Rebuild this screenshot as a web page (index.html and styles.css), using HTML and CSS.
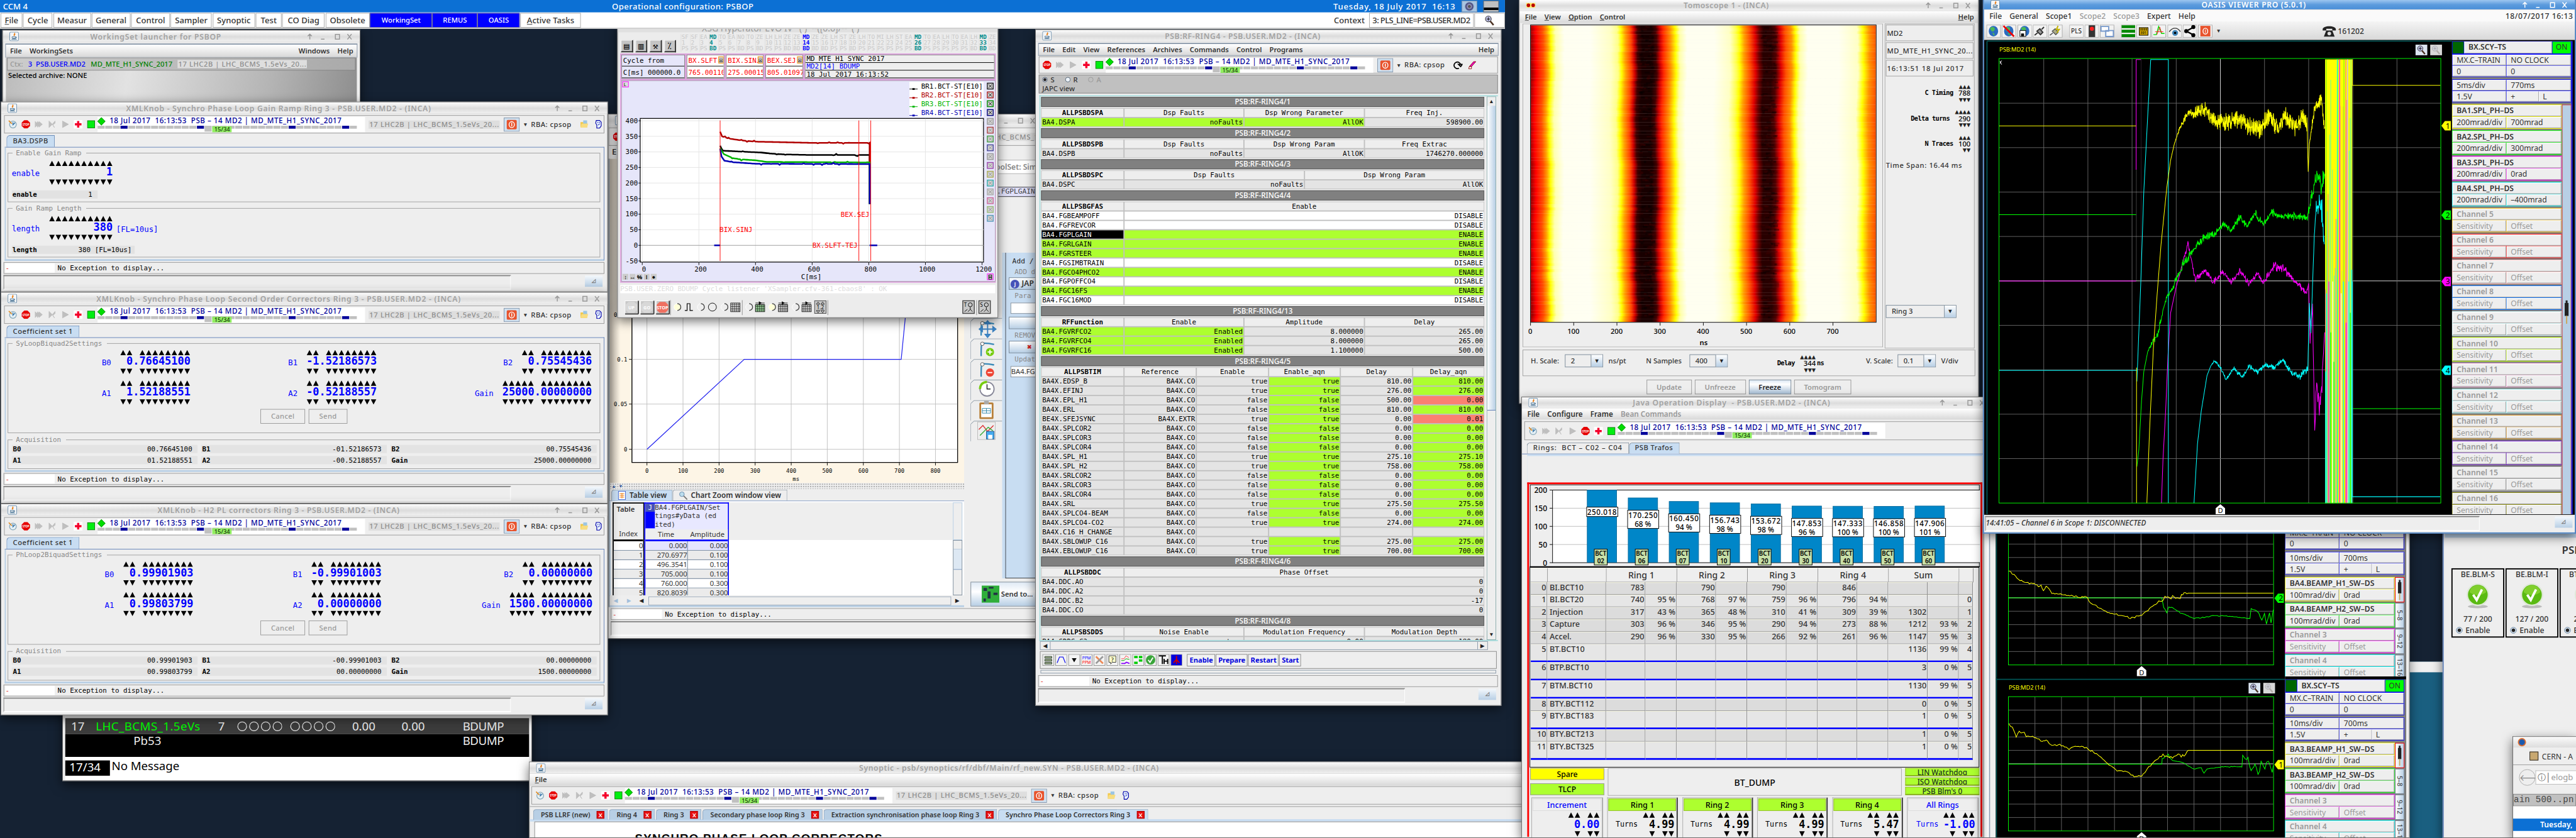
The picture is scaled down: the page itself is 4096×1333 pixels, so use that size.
FILE: index.html
```html
<!DOCTYPE html>
<html lang="en">
<head>
<meta charset="utf-8">
<title>PSB operation console</title>
<link rel="stylesheet" href="styles.css">
</head>
<body>
<svg class="defs" width="0" height="0">
  <symbol id="java" viewBox="0 0 16 16"><rect x=".5" y=".5" width="15" height="15" rx="2" fill="#f4f6f8" stroke="#5f86a6"/><path d="M8.500 2c2 1.500-2.500 2.500-.3 5M10 4c-1.500 1-1.800 1.700-1 2.800" fill="none" stroke="#e8801a" stroke-width="1.300"/><path d="M4.500 8.500h6v2.500h-6zM10.500 9h1.500v1.500h-1.500M3.500 13h9M5 12h6" fill="none" stroke="#4d7696"/></symbol>
  <symbol id="clock" viewBox="0 0 18 16"><circle cx="9" cy="8.500" r="6.500" fill="#e4f0f6" stroke="#88a8b8" stroke-width="1.500"/><path d="M9 4v5l4-4" fill="none" stroke="#2a6aa0" stroke-width="1.500"/><path d="M1 1l6 6" stroke="#e08a20" stroke-width="2"/></symbol>
  <symbol id="stop" viewBox="0 0 16 16"><path d="M5 .5h6L15.500 5v6L11 15.500H5L.5 11V5z" fill="#e60000"/><text x="8" y="10.300" font-size="6" font-weight="bold" text-anchor="middle" fill="#fff" textLength="12" lengthAdjust="spacingAndGlyphs">STOP</text></symbol>
  <symbol id="ff" viewBox="0 0 16 16"><path d="M1 2l7 6-7 6zM8 2l7 6-7 6zM5 2l7 6-7 6z" fill="#bfbfbf"/></symbol>
  <symbol id="skip" viewBox="0 0 16 16"><path d="M2 2l6 6-6 6zM8 8l5-6v4L9 9l3 5z" fill="#bfbfbf" stroke="#bfbfbf"/></symbol>
  <symbol id="play" viewBox="0 0 16 16"><path d="M3 2l11 6-11 6z" fill="#bfbfbf" stroke="#a8a8a8" stroke-width=".5"/></symbol>
  <symbol id="plus" viewBox="0 0 16 16"><rect width="16" height="16" fill="#fff"/><path d="M6 2h4v4h4v4h-4v4H6v-4H2V6h4z" fill="#f4002c"/></symbol>
  <symbol id="go" viewBox="0 0 16 16"><rect x="1.500" y="1.500" width="13" height="13" fill="#0e1" stroke="#070"/></symbol>
  <symbol id="power" viewBox="0 0 27 24"><rect x=".5" y=".5" width="26" height="23" fill="#cfe0ef" stroke="#7a8ea6"/><rect x="5" y="4" width="17" height="16" rx="2" fill="#e8532c"/><ellipse cx="13.500" cy="12" rx="4.500" ry="5" fill="none" stroke="#fff" stroke-width="1.500"/><path d="M13.500 9v6" stroke="#fff" stroke-width="1.500"/></symbol>
  <symbol id="folder" viewBox="0 0 16 16"><path d="M1 4h5l1 1h6v9H1z" fill="#f2c84a"/><path d="M6 1h7v6H6z" fill="#9cc6e4"/><path d="M3 7h12l-2 7H1z" fill="#f8dd80"/></symbol>
  <symbol id="ghost" viewBox="0 0 16 16"><path d="M4 1h6l3 3v7l-3 4H5V9L3 6z" fill="#e8f4ff" stroke="#00a" stroke-width="1.300"/><path d="M7 4v2M10 4v2M7 9c3 0 3-1 3-2" stroke="#00a" fill="none"/></symbol>
  <symbol id="mag" viewBox="0 0 20 18"><circle cx="8" cy="6.500" r="4.500" fill="#b9bbe0" stroke="#333"/><path d="M11 10l5 6" stroke="#4a3020" stroke-width="2.500"/><path d="M8 4v5M5.500 6.500h5" stroke="#111"/></symbol>
  <symbol id="plug" viewBox="0 0 8 40"><rect x="1" y="6" width="6" height="20" fill="#222"/><rect x="2.500" y="2" width="3" height="5" fill="#222"/><path d="M4 26v12" stroke="#caa860" stroke-width="2"/></symbol>
  <symbol id="check" viewBox="0 0 40 44"><ellipse cx="20" cy="40" rx="17" ry="3" fill="#bbb"/><circle cx="20" cy="20" r="18" fill="#5aba12" stroke="#dfe8d8" stroke-width="2.500"/><path d="M6 16a14 12 0 0 1 28 0c-8 6-20 6-28 0z" fill="#9ade40" opacity=".6"/><path d="M12 20l6 9 9-18" fill="none" stroke="#fff" stroke-width="4"/></symbol>
</svg>

<main class="desk">
  <div class="sea"></div>

  <header class="ccm">
    <div class="ccm-title"><span class="ccm-name">CCM 4</span><span class="ccm-conf" data-w="241">Operational configuration: PSBOP</span><span class="ccm-date" data-w="208">Tuesday, 18 July 2017&nbsp; 16:13</span><i class="gear"></i><i class="mini"></i></div>
    <nav class="ccm-menu" id="ccm-menu"></nav>
  </header>

  <section class="win launcher">
    <div class="title" data-title="WorkingSet launcher for PSBOP" data-tw="223"></div>
    <div class="menu framed"><span>File</span><span>WorkingSets</span><b></b><span>Windows</span><span>Help</span></div>
    <div class="metal">
      <div class="ctx"><span class="dim">Ctx:</span><span class="blue">3&nbsp; PSB.USER.MD2</span><span class="green">MD_MTE_H1_SYNC_2017</span><span class="lhc" data-w="218">17 LHC2B | LHC_BCMS_1.5eVs_20...</span></div>
      <div class="arch">Selected archive: NONE</div>
    </div>
  </section>

  <section class="win pls">
    <div class="pls-row a"><span>17</span><span class="lime" data-w="178">LHC_BCMS_1.5eVs</span><span>7</span><svg viewBox="0 0 77 18"><use href="#rings"/><g fill="none" stroke="#eee" stroke-width="1.300"><circle cx="9" cy="9" r="7.500"/><circle cx="29" cy="9" r="7.500"/><circle cx="49" cy="9" r="7.500"/><circle cx="69" cy="9" r="7.500"/></g></svg><svg viewBox="0 0 77 18"><g fill="none" stroke="#eee" stroke-width="1.300"><circle cx="9" cy="9" r="7.500"/><circle cx="29" cy="9" r="7.500"/><circle cx="49" cy="9" r="7.500"/><circle cx="69" cy="9" r="7.500"/></g></svg><span>0.00</span><span>0.00</span><span data-w="70">BDUMP</span></div>
    <div class="pls-row b"><span></span><span class="mid">Pb53</span><span></span><span></span><span></span><span></span><span></span><span data-w="70">BDUMP</span></div>
    <div class="pls-msg"><span class="cnt">17/34</span><span data-w="115">No Message</span></div>
  </section>

  <section class="win editor">
    <div class="title" data-title="" data-tw="0"></div>
    <div class="toolbar" data-kind="short"></div>
    <div class="etab">E</div>
    <div class="ebody">
      <div class="eleft">
        <svg class="echart" id="echart" viewBox="1036 270 603 552"></svg>
        <div class="split">▲▼</div>
        <div class="etabs"><span class="on"><svg viewBox="0 0 16 16"><rect x="2" y="1" width="12" height="14" fill="#fff" stroke="#46c"/><path d="M4 5h8M4 8h8M4 11h8M8 4v9" stroke="#e70"/></svg>Table view</span><span><svg viewBox="0 0 16 16"><circle cx="6" cy="6" r="4" fill="#bde" stroke="#68a"/><path d="M9 9l6 6" stroke="#777" stroke-width="2"/></svg>Chart Zoom window view</span></div>
        <div class="etable">
          <div class="eidx" id="eidx"></div>
          <div class="edat" id="edat"></div>
          <div class="esb"><i></i><i class="bar"></i></div>
        </div>
        <div class="ehs"><i>◀</i><i>▶</i><i class="k">◀</i><b></b><i class="k">▶</i></div>
      </div>
      <div class="eright">
        <div class="eup"><div class="lbl">ToolSet: Simple</div><div class="lav">BA4.FGPLGAIN</div></div>
        <div class="elow">
          <div class="tools" id="tools"></div>
          <div class="add"><p>Add /</p><p class="g">ADD d</p><div class="btn jp"><i>J</i>JAP</div><p class="g">Para</p><div class="box"></div><div class="btn"></div><p class="g">REMOV</p><div class="btn x">✖</div><p class="g">Updat</p><div class="box t">BA4.FG</div></div>
        </div>
        <div class="send"><svg viewBox="0 0 32 30"><rect x="2" width="30" height="29" fill="#2fae3a"/><path d="M5 4h6v5H5zM14 2h8v3h-8zM12 10h5v12h-5zM22 12h7v4h-7zM5 22h4v5H5z" fill="#234"/></svg>Send to...</div>
      </div>
    </div>
    <div class="status"><i>-</i>No Exception to display...</div>
    <div class="foot"><b></b></div>
  </section>

  <section class="win xsg">
    <div class="xtitle">XSG Hyperator EVO IV &nbsp; ( ) &nbsp;--([0.6]/-- &nbsp;( )</div>
    <div class="xsel"><span class="xb">▤</span><span class="xb">▥</span><span class="xb">⚒</span><span class="xb">⁒</span><div class="xcols" id="xcols"></div></div>
    <div class="xpink">
      <div class="xinfo">
        <div class="xc lavb"><span>Cycle from</span><span>C[ms] 000000.0</span></div>
        <div class="xc red"><span>BX.SLFT-T</span><span>765.00110</span><i>☒</i></div>
        <div class="xc red"><span>BIX.SINJ</span><span>275.00015</span><i>☒</i></div>
        <div class="xc red"><span>BEX.SEJ</span><span>805.01097</span><i>☒</i></div>
        <div class="xc three"><span>MD_MTE_H1_SYNC_2017</span><span class="blue">MD2[14] BDUMP</span><span>18 Jul 2017 16:13:52</span></div>
      </div>
      <svg id="xplot" class="xplot" viewBox="1057 139 636 342"></svg>
    </div>
    <div class="xmsg">PSB.USER.ZERO BDUMP Cycle listener 'XSampler.cfv-361-cbaos8' : OK</div>
    <svg class="xtools" id="xtools" viewBox="1050 502 648 38"></svg>
  </section>

  <section class="win knob ka">
    <div class="title" data-title="XMLKnob - Synchro Phase Loop Gain Ramp Ring 3 - PSB.USER.MD2 - (INCA)" data-tw="519"></div>
    <div class="toolbar" data-kind="full"></div>
    <div class="tabs"><span data-w="60">BA3.DSPB</span></div>
    <div class="panel">
      <fieldset><legend>Enable Gain Ramp</legend><div class="solo"><div class="kn" data-l="enable" data-v="1" data-s="10"></div></div><div class="acq1"><b>enable</b><span>1</span></div></fieldset>
      <fieldset><legend>Gain Ramp Length</legend><div class="solo"><div class="kn" data-l="length" data-v="380" data-s="10"></div><span class="unit">[FL=10us]</span></div><div class="acq1 w"><b>length</b><span>380 [FL=10us]</span></div></fieldset>
    </div>
    <div class="status"><i>-</i>No Exception to display...</div>
    <div class="foot"><b></b><u>◿</u></div>
  </section>

  <section class="win knob kb">
    <div class="title" data-title="XMLKnob - Synchro Phase Loop Second Order Correctors Ring 3 - PSB.USER.MD2 - (INCA)" data-tw="620"></div>
    <div class="toolbar" data-kind="full"></div>
    <div class="tabs"><span data-w="102">Coefficient set 1</span></div>
    <div class="panel coef" data-legend="SyLoopBiquad2Settings" data-k="B0| 0.76645100|B1|-1.52186573|B2| 0.75545436|A1| 1.52188551|A2|-0.52188557|Gain|25000.00000000" data-a="00.76645100|-01.52186573|00.75545436|01.52188551|-00.52188557|25000.00000000"></div>
    <div class="status"><i>-</i>No Exception to display...</div>
    <div class="foot"><b></b><u>◿</u></div>
  </section>

  <section class="win knob kc">
    <div class="title" data-title="XMLKnob - H2 PL correctors Ring 3 - PSB.USER.MD2 - (INCA)" data-tw="412"></div>
    <div class="toolbar" data-kind="full"></div>
    <div class="tabs"><span data-w="102">Coefficient set 1</span></div>
    <div class="panel coef shift" data-legend="PhLoop2BiquadSettings" data-k="B0| 0.99901903|B1|-0.99901003|B2| 0.00000000|A1| 0.99803799|A2| 0.00000000|Gain|1500.00000000" data-a="00.99901903|-00.99901003|00.00000000|00.99803799|00.00000000|1500.00000000"></div>
    <div class="status"><i>-</i>No Exception to display...</div>
    <div class="foot"><b></b><u>◿</u></div>
  </section>

  <section class="win syn">
    <div class="title" data-title="Synoptic - psb/synoptics/rf/dbf/Main/rf_new.SYN - PSB.USER.MD2 - (INCA)" data-tw="510"></div>
    <div class="menu"><span><u>F</u>ile</span></div>
    <div class="toolbar" data-kind="full"></div>
    <div class="stabs"><span>PSB LLRF (new)<i>X</i></span><span>Ring 4<i>X</i></span><span>Ring 3<i>X</i></span><span>Secondary phase loop Ring 3<i>X</i></span><span>Extraction synchronisation phase loop Ring 3<i>X</i></span><span class="on">Synchro Phase Loop Correctors Ring 3<i>X</i></span></div>
    <div class="sbody"><span data-w="422">SYNCHRO PHASE LOOP CORRECTORS</span></div>
  </section>

  <section class="win rf">
    <div class="title" data-title="PSB:RF-RING4 - PSB.USER.MD2 - (INCA)" data-tw="265"></div>
    <div class="menu framed"><span>File</span><span>Edit</span><span>View</span><span>References</span><span>Archives</span><span>Commands</span><span>Control</span><span>Programs</span><b></b><span>Help</span></div>
    <div class="toolbar" data-kind="rf"></div>
    <div class="sra"><div><i class="dot"></i>S<i></i>R<i class="off"></i><span class="dim">A</span></div><div>JAPC view</div></div>
    <div class="rfmain"><div class="rft" id="rft"></div><div class="vs"><i>▲</i><b></b><i>▼</i></div></div>
    <div class="hs"><i>◀</i><b></b><i>▶</i></div>
    <div class="rfbar"><div id="rficons"></div><button data-w="40">Enable</button><button data-w="46">Prepare</button><button data-w="44">Restart</button><button data-w="29">Start</button></div>
    <div class="thin"></div>
    <div class="status"><i>-</i>No Exception to display...</div>
    <div class="foot"><b></b><u>◿</u></div>
  </section>

  <section class="win tomo">
    <div class="title" data-title="Tomoscope 1 - (INCA)" data-tw="145" data-icon="tomo"></div>
    <div class="menu"><span><u>F</u>ile</span><span><u>V</u>iew</span><span><u>O</u>ption</span><span><u>C</u>ontrol</span><b></b><span><u>H</u>elp</span></div>
    <div class="tmain">
      <svg id="tplot" viewBox="2590 40 613 551"></svg>
      <div class="tside">
        <div class="tb">MD2</div><div class="tb" data-w="146">MD_MTE_H1_SYNC_20...</div><div class="tb" data-w="131">16:13:51 18 Jul 2017</div>
        <div class="tk"><label>C Timing</label><span>▲▲▲<b>788</b>▼▼▼</span></div>
        <div class="tk"><label>Delta turns</label><span>▲▲▲▲<b>290</b>▼▼▼</span></div>
        <div class="tk"><label>N Traces</label><span>▲▲▲<b>100</b>▼▼</span></div>
        <p data-w="130">Time Span: 16.44 ms</p>
        <div class="sel wide"><span>Ring 3</span><i>▼</i></div>
      </div>
    </div>
    <div class="tctl"><span>H. Scale:</span><div class="sel"><span>2</span><i>▼</i></div><span class="n1">ns/pt</span><span class="n2">N Samples</span><div class="sel"><span>400</span><i>▼</i></div><label>Delay</label><span class="tks">▲▲▲▲<b>344</b>▼▼▼</span><label class="u">ns</label><span class="n3">V. Scale:</span><div class="sel"><span>0.1</span><i>▼</i></div><span class="n1">V/div</span></div>
    <div class="tbtn"><button>Update</button><button>Unfreeze</button><button class="on">Freeze</button><button>Tomogram</button></div>
  </section>

  <section class="win jod">
    <div class="title" data-title="Java Operation Display&nbsp; - PSB.USER.MD2 - (INCA)" data-tw="336"></div>
    <div class="menu"><span>File</span><span>Configure</span><span>Frame</span><span class="dim">Bean Commands</span></div>
    <div class="toolbar" data-kind="jod"></div>
    <div class="jtabs"><span data-w="152">Rings:&nbsp; BCT – C02 – C04</span><span class="on" data-w="65">PSB Trafos</span></div>
    <div class="jbody">
      <svg id="jplot" class="jplot" viewBox="2602 824 766 141"></svg>
      <div class="jt" id="jt"></div>
      <div class="jmid">
        <div class="l"><span class="y">Spare</span><span>TLCP</span></div>
        <div class="c">BT_DUMP</div>
        <div class="r"><span>LIN Watchdog</span><span>ISO Watchdog</span><span>PSB Blm's 0</span></div>
      </div>
      <div class="jbot" id="jbot"></div>
    </div>
  </section>

  <section class="win blm">
    <div class="bstrip"></div>
    <h2>PSB</h2>
    <div class="cards">
      <div class="card"><b>BE.BLM-S</b><svg><use href="#check"/></svg><span>77 / 200</span><em><i></i>Enable</em></div>
      <div class="card"><b>BE.BLM-I</b><svg><use href="#check"/></svg><span>127 / 200</span><em><i></i>Enable</em></div>
      <div class="card"><b>BT.BLM-1</b><svg><use href="#check"/></svg><span>2 / 200</span><em><i></i>Enable</em></div>
    </div>
  </section>

  <section class="win ff">
    <div class="fftitle"><i></i></div>
    <div class="fftab"><i></i>CERN - A</div>
    <div class="ffnav"><i>🡐</i><span>ⓘ│<em>elogb</em></span></div>
    <div class="ffgray">ain 500..pn</div>
    <div class="ffblue">Tuesday,</div>
  </section>

  <section class="win scope2">
    <div class="frame2"></div>
    <div class="plots2">
      <svg id="sc1" viewBox="3395 907 492 246"></svg>
      <svg id="sc2" viewBox="3395 1153 492 273"></svg>
    </div>
    <div class="side2"><div class="pan p1" id="pan1"></div><div class="pan p2" id="pan2"></div></div>
  </section>

  <section class="win oasis">
    <div class="title act" data-title="OASIS VIEWER PRO (5.0.1)" data-tw="178" data-act="1"></div>
    <div class="menu"><span>File</span><span>General</span><span>Scope1</span><span class="dim">Scope2</span><span class="dim">Scope3</span><span>Expert</span><span>Help</span><b></b><span class="date" data-w="115">18/07/2017 16:13</span></div>
    <div class="otool"><div id="oicons"></div><em>▼</em><strong><svg viewBox="0 0 24 18"><path d="M1 6C1-1 23-1 23 6v2h-6V5H7v3H1zM7 8h10l4 10H3z" fill="#222"/><circle cx="12" cy="13" r="3" fill="#ddd"/></svg>161202</strong></div>
    <div class="omain"><svg id="oplot" viewBox="3377 69 794 808"></svg><div class="pan big" id="pan0"></div></div>
    <div class="foot o"><b>14:41:05 – Channel 6 in Scope 1: DISCONNECTED</b><u>◿</u></div>
  </section>
</main>
<script src="app.js"></script>
</body>
</html>
```
FILE: styles.css
```css
* { box-sizing: border-box; }
html, body { margin: 0; width: 4096px; height: 1333px; overflow: hidden; background: #152130; }
.defs { position: absolute; }
.desk { position: relative; width: 4382px; height: 1426px; overflow: hidden; transform: scale(.93474, .93478); transform-origin: 0 0; background: #152233; font: 600 12px/16px "Noto Sans", sans-serif; color: #333; }
.desk i, .desk em { font-style: normal; }
.desk svg { font-weight: 400; }
button { font: inherit; }
p, h2 { margin: 0; }
.sea { position: absolute; left: 4098px; top: 1126px; width: 58px; height: 300px; background: #1a5f80; border-top: 18px solid #f0f0f0; }
.dim { color: #999; }
.blue { color: #00f; }
.green { color: #008000; }

.win { position: absolute; isolation: isolate; display: flex; flex-direction: column; background: #eee; border: 1px solid #666; box-shadow: 0 6px 18px rgba(0, 0, 0, .6); overflow: hidden; }
.title { flex: none; height: 20px; padding: 0 12px 0 11px; display: flex; align-items: center; background: linear-gradient(#fdfdfd, #dcdcdc 55%, #f0f0f0); color: #a2a2a2; font-size: 13px; border-bottom: 1px solid #ddd; white-space: nowrap; }
.title svg { width: 16px; height: 16px; flex: none; }
.title .tt { flex: 1; display: flex; justify-content: center; }
.title .wb { width: 82px; flex: none; margin-left: 20px; }
.act { background: linear-gradient(#9dc6f0, #5c9bdd 50%, #4a8fd8); color: #fff; height: 17px; }
.menu { flex: none; height: 20px; display: flex; align-items: center; gap: 13px; padding: 0 7px 0 9px; background: linear-gradient(#fff, #d8d8d8); color: #333; white-space: nowrap; }
.menu b { flex: 1; }
.framed { border: 1px solid #8796a8; border-width: 2px 1px 1px; margin: 2px 4px 0; padding: 0 6px 0 7px; }

/* console bar */
.ccm { position: absolute; left: 0; top: 0; width: 2560px; height: 49px; background: #fff; border-bottom: 2px solid #ccc; z-index: 2; }
.ccm-title { height: 21px; background: #0c70d4; color: #fff; display: grid; grid-template-columns: 1036px 1227px 218px 37px 28px; align-items: center; font-size: 14px; font-weight: 500; padding-left: 5px; white-space: nowrap; }
.ccm-title span { justify-self: start; }
.gear { width: 27px; height: 20px; background: radial-gradient(circle, #555 2px, #99b 3px, #447 6px, #a8c4e0 8px); border: 1px solid #7a8ea6; }
.mini { width: 27px; height: 20px; background: linear-gradient(#c0c0c0 11px, #000 11px, #000 15px, #c0c0c0 15px); border: 1px solid #666; }
.ccm-menu { display: flex; height: 26px; padding: 1px 0 0 1px; gap: 1.300px; align-items: stretch; font-weight: 500; font-size: 14px; }
.ccm-menu span { border: 1px solid #a8a8a8; display: flex; align-items: center; justify-content: center; height: 25px; background: #fff; white-space: nowrap; }
.ccm-menu .ws { background: #00f; color: #fff; border-color: #779; font-size: 12px; margin: 0 -.650px; }
.ccm-menu .gap { flex: 1; border: 0; justify-content: flex-end; padding-right: 6px; }
.ccm-menu svg { width: 22px; height: 20px; }

/* launcher */
.launcher { left: 4px; top: 51px; width: 609px; height: 130px; }
.launcher .menu { height: 24px; }
.metal { flex: 1; margin: 0 5px; background: linear-gradient(100deg, #bbb, #e2e2e2 35%, #b4b4b4 75%, #8e8e8e); }
.ctx { height: 22px; margin: 0 2px; border: 1px solid #888; display: flex; gap: 9px; align-items: center; padding-left: 4px; background: linear-gradient(90deg, #ccc, #aaa); font-weight: 500; }
.lhc { background: #dedede; color: #8c8c8c; font-weight: 500; white-space: nowrap; padding: 0 1px; line-height: 14px; }
.arch { color: #000; padding: 1px 4px; font-weight: 500; }

/* timing toolbar */
.toolbar { flex: none; height: 31px; margin: 2px 5px 0 5px; border: 1px solid #999; display: flex; align-items: center; padding-left: 3px; background: #eee; white-space: nowrap; }
.toolbar > svg { width: 16px; height: 15px; margin: 0 3.100px; flex: none; }
.tim { width: 455px; height: 26px; background: #fff; color: #00009a; position: relative; flex: none; display: flex; flex-direction: column; }
.tim .row1 { height: 15px; display: flex; align-items: center; font-weight: 500; font-size: 12.500px; }
.tim .row1::before { content: ""; width: 11px; height: 11px; margin-right: 7px; background: #0d0; border: 1px solid #070; transform: rotate(45deg) scale(.75); }
.tim .row2 { display: flex; gap: 1px; width: 441px; height: 10px; }
.tim .row2 i { flex: 1; height: 5px; background: #c0c0c0; }
.tim .row2 .n { background: #00009a; }
.tim .row2 .cur { height: 10px; }
.tim .row2 .lab { flex: none; width: 33px; height: 10px; margin: 1px -34px 0 0; z-index: 1; background: #90ee60; color: #010; font: 10px/10px "Noto Sans", sans-serif; text-align: center; }
.toolbar .lhc { margin-left: 6px; }
.toolbar .pw { width: 27px; height: 24px; margin: 0 5px 0 7px; }
.toolbar em { font-size: 9px; margin-right: 5px; width: 9px; }
.toolbar .rba { margin-right: 10px; font-weight: 500; }
.toolbar .last { margin: 0 4px; }

/* knob windows */
.knob { left: 1px; width: 1033px; }
.ka { top: 173px; height: 324px; }
.kb { top: 497px; height: 360px; }
.kc { top: 857px; height: 360px; }
.tabs { flex: none; height: 23px; padding: 3px 0 0 9px; display: flex; }
.tabs span { background: #c8ddf2; border: 1px solid #6a8cb8; border-bottom: 0; padding: 1px 10px 0; border-top-left-radius: 6px; height: 20px; font-weight: 500; white-space: nowrap; }
.panel { flex: 1; margin: 0 5px 0 6px; border: 1px solid #6382b8; border-bottom: 3px solid #b8cfe5; border-left: 2px solid #b8cfe5; padding: 2px 6px 0 3px; }
fieldset { margin: 0 0 3px; padding: 0 6px; border: 1px solid #a0a0a0; height: 91px; font-family: "DejaVu Sans Mono", monospace; min-width: 0; }
legend { font-size: 11.600px; font-weight: 400; color: #888; padding: 0 8px 0 6px; line-height: 15px; margin-left: 1px; }
.panel.coef fieldset:first-child { height: 160px; margin-bottom: 4px; }
.panel.coef fieldset:last-child { height: 57px; margin-bottom: 0; }
.kn { display: flex; align-items: center; color: #00f; font-family: "DejaVu Sans Mono", monospace; }
.kn label { font-size: 13.200px; font-weight: 400; padding-top: 3px; }
.kn pre { margin: 0 0 0 15px; font: bold 18.100px/18px "DejaVu Sans Mono", monospace; text-align: right; }
.kn pre i { display: block; height: 11px; color: #000; white-space: pre; }
.kn pre i:last-child { margin-top: 3px; }
.kn pre svg { display: block; height: 10px; margin-left: auto; }
.solo { display: flex; align-items: center; height: 50px; padding: 2px 0 0 0; }
.unit { color: #00f; font-size: 13.200px; font-weight: 400; padding: 5px 0 0 6px; }
.acq1 { width: 146px; height: 14px; background: #e2e2e2; color: #000; display: flex; justify-content: space-between; font-size: 11.600px; line-height: 14px; font-weight: 400; padding: 0 9px 0 1px; margin-top: 6px; }
.acq1.w { width: 209px; padding-right: 5px; }
.kg { display: grid; grid-template-columns: 304px 317px 366px; justify-items: end; row-gap: 6px; padding-top: 1px; }
.kg .kn { height: 46px; }
.shift .kg { grid-template-columns: 309px 320px 359px; }
.cs { display: flex; justify-content: center; gap: 6px; margin-top: 5px; }
.cs span { height: 25px; line-height: 23px; border: 1px solid #999; color: #999; padding: 0 17px; font: 500 12px/23px "Noto Sans", sans-serif; }
.ag { display: grid; grid-template-columns: 316px 316px 351px; gap: 5px 6px; font-size: 11.600px; color: #000; line-height: 14px; font-weight: 400; margin-top: 1px; }
.ag div { background: #e3e3e3; display: flex; justify-content: space-between; padding: 0 9px 0 2px; height: 14px; }
.status { flex: none; height: 20px; margin: 2px 5px 0 4px; border: 1px solid #999; display: flex; align-items: center; gap: 5px; color: #000; font: 11.600px/16px "DejaVu Sans Mono", monospace; }
.status i { width: 84px; height: 16px; background: #fff; color: #e03030; margin-left: 2px; }
.foot { flex: none; height: 25px; margin: 2px 8px 4px 4px; display: flex; justify-content: space-between; }
.foot b { width: 863px; border: 1px solid; border-width: 2px 1px; border-color: #888 #fff #fff #888; }
.foot u { width: 30px; height: 19px; margin-top: 1px; background: linear-gradient(#f4f8fc, #b8cfe5); text-decoration: none; text-align: center; font-size: 9px; color: #777; }

/* cycle strip */
.pls { left: 106px; top: 1200px; width: 799px; height: 129px; padding: 20px 4px 0; background: #eee; font: 20px/24px "Noto Sans", sans-serif; color: #eee; white-space: nowrap; }
.pls-row { display: grid; grid-template-columns: 42px 208px 32px 90px 106px 84px 104px 1fr; height: 27px; align-items: center; padding-left: 10px; }
.pls-row span { justify-self: start; }
.pls-row svg { width: 77px; height: 18px; }
.pls-row .mid { margin-left: 64px; }
.pls .a { background: #3c3c3c; margin-top: 1px; }
.pls .b { background: #000; height: 39px; align-items: start; }
.lime { color: #0f0; }
.pls-msg { background: #fff; height: 39px; color: #000; display: flex; align-items: flex-start; gap: 3px; }
.cnt { background: #000; color: #fff; height: 26px; margin-top: 6px; padding: 0 7px; width: 76px; }
.pls-msg span + span { margin-top: 4px; }

/* function editor */
.editor { left: 1034px; top: 194px; width: 741px; height: 893px; }
.editor .toolbar { margin-left: 0; }
.etab { flex: none; height: 22px; padding: 2px 6px; font-size: 14px; }
.ebody { display: flex; flex: 1; min-height: 0; }
.eleft { width: 605px; display: flex; flex-direction: column; border-left: 2px solid #7a8a99; }
.echart { height: 552px; width: 603px; flex: none; }
.split { height: 10px; flex: none; background: radial-gradient(circle, #aaa 1px, transparent 1px) 0 0 / 4px 4px; font-size: 8px; line-height: 10px; color: #3a5a9a; letter-spacing: 4px; padding-left: 3px; }
.etabs { height: 20px; flex: none; display: flex; padding-left: 3px; border-bottom: 1px solid #6382b8; margin-top: 1px; }
.etabs span { border: 1px solid #7a8a99; border-bottom: 0; padding: 0 9px; display: flex; gap: 5px; align-items: center; border-top-left-radius: 5px; font-size: 12.500px; white-space: nowrap; }
.etabs .on { background: #c8ddf2; }
.etabs svg { width: 16px; height: 16px; }
.etable { height: 160px; flex: none; display: flex; padding: 2px 3px 0; background: #fff; overflow: hidden; border-left: 2px solid #c8ddf2; font: 12px/15px "Noto Sans", sans-serif; position: relative; }
.eidx { width: 54px; border: 2px solid #000; border-bottom: 0; }
.edat { width: 145px; border: 2px solid #00f; border-bottom: 0; }
.eh { height: 64px; background: #eee; padding: 2px 5px; font-weight: 600; position: relative; display: flex; flex-direction: column; justify-content: space-between; border-bottom: 3px solid #000; }
.edat .eh { background: #e8e8ff; font: 11.600px/14px "DejaVu Sans Mono", monospace; border-color: #00f; padding: 0; }
.eh p { display: grid; grid-template-columns: 16px 1fr; white-space: nowrap; }
.eh p i { background: linear-gradient(#4653b8 14px, #00f 14px); color: #fff; height: 42px; text-align: center; }
.eh div { font: 12px/17px "Noto Sans", sans-serif; display: grid; grid-template-columns: 1fr 1fr; text-align: center; background: #eee; }
.er { height: 16px; border-bottom: 1px solid #6b7f96; text-align: right; display: grid; grid-template-columns: 72px 1fr; }
.eidx .er { display: block; }
.er.s { background: #ebebeb; }
.edat .er.f { background: #e4e4ff; }
.edat .er span:first-child { border-right: 1px solid #6b7f96; }
.esb { margin-left: auto; width: 398px; display: grid; grid-template: 64px 1fr / 1fr 16px; background: linear-gradient(#eee 64px, #fff 64px); }
.esb i { grid-column: 2; border: 1px solid #b8cfe5; }
.esb .bar { border-color: #7a8a99; background: linear-gradient(#eee 14px, #a3b8cc 14px, #dde8f3 15px 48px, #7a99c0 49px, #eee 50px); }
.ehs { height: 20px; margin-top: 1px; display: flex; background: #eee; border-bottom: 3px solid #b8cfe5; align-items: center; font-size: 9px; }
.ehs i { width: 22px; text-align: center; color: #a3c0dc; }
.ehs b { flex: 1; height: 15px; border: 1px solid #9aa8b8; }
.ehs .k { color: #222; }
.eright { flex: 1; display: flex; flex-direction: column; padding-left: 11px; }
.eup { height: 160px; flex: none; color: #888; font-size: 13px; }
.eup .lbl { background: #fff; height: 24px; padding: 3px 0 0 35px; border: 1px solid #aaa; margin-top: 2px; white-space: nowrap; }
.lav { margin-top: 22px; height: 17px; background: #e0e0fa; color: #444; font: 12px/15px "DejaVu Sans Mono", monospace; padding-left: 22px; border: 1px solid #333; }
.elow { height: 554px; display: flex; }
.tools { width: 54px; flex: none; padding-top: 111px; }
.tools svg { display: block; width: 54px; height: 35px; }
.add { flex: 1; background: #c8ddf2; border-left: 5px solid #c8ddf2; box-shadow: inset 1px 0 #111, inset 0 -1px #111; padding: 5px 6px; }
.add p { padding-left: 6px; color: #222; font: 12px/18px "DejaVu Sans Mono", monospace; }
.add p.g { color: #888; padding-left: 10px; font-size: 11.600px; }
.add .btn { height: 21px; background: linear-gradient(#fff, #b8cfe5); border: 1px solid #7a8a99; margin: 1px 0; font-size: 13px; line-height: 18px; white-space: nowrap; }
.btn i { display: inline-block; width: 15px; height: 15px; border-radius: 8px; background: #4653b8; color: #fff; font-size: 10px; line-height: 15px; text-align: center; margin: 0 4px 0 2px; }
.add .x { color: #c22; text-align: right; padding-right: 22px; font-size: 10px; }
.add .box { height: 19px; background: #fff; border: 1px solid #7a8a99; margin: 3px 0 5px 3px; }
.add .t { font: 400 12px/17px "Noto Sans", sans-serif; color: #333; }
.send { height: 42px; margin-top: 6px; border: 1px solid #7a8a99; background: linear-gradient(#dfeaf5, #fff 40%, #b8cfe5); display: flex; align-items: center; gap: 3px; padding-left: 16px; font-size: 12px; white-space: nowrap; }
.send svg { width: 32px; height: 31px; }

/* sampler */
.xsg { left: 1050px; top: 40px; width: 648px; height: 501px; font: 11.600px/13px "DejaVu Sans Mono", monospace; color: #000; background: #ececec; }
.xtitle { height: 15px; line-height: 18px; padding-left: 143px; color: #999; font: 15px/17px "Noto Sans", sans-serif; white-space: pre; margin-top: -1px; background: #e0e0e0; }
.xsel { height: 37px; display: flex; align-items: flex-end; gap: 4px; padding: 0 0 2px 5px; }
.xb { width: 21px; height: 21px; background: #c4c4c4; border: 1px solid; border-color: #fff #333 #333 #fff; border-bottom-width: 2px; border-right-width: 2px; text-align: center; font-size: 15px; line-height: 18px; }
.xcols { display: grid; grid-template-columns: repeat(34, 15.850px); margin: 0 0 -1px 4px; font-size: 10px; line-height: 10px; color: #c8c8c8; height: 32px; }
.xcols span { overflow: hidden; border-left: 1px solid #ddd; height: 30px; }
.xcols .t { color: #008b8b; font-weight: bold; }
.xcols .n { color: #00f; font-weight: bold; }
.xpink { margin: 0 3px 0 4px; background: #dda0dd; padding: 2px; height: 391px; display: flex; flex-direction: column; }
.xinfo { display: flex; height: 41px; gap: 3px; }
.xc { width: 64px; border: 1px solid #888; background: #fff; display: grid; grid-template-rows: 1fr 1fr; overflow: hidden; white-space: nowrap; position: relative; align-items: center; }
.xc span { overflow: hidden; padding-left: 2px; border-bottom: 1px solid #000; line-height: 18px; }
.xc.lavb { width: 108px; background: #e6e6fa; }
.xc.red { color: #f00; }
.xc i { position: absolute; right: 0; top: 2px; background: #ccc; color: #000; border: 1px solid #f90; line-height: 10px; }
.xc.three { flex: 1; grid-template-rows: repeat(3, 1fr); background: #eee; }
.xc.three span { line-height: 12px; }
.xplot { width: 636px; height: 342px; margin-top: 3px; }
.xmsg { height: 14px; margin: 4px 4px; background: #fff; color: #ddd; white-space: nowrap; }
.xtools { width: 646px; height: 38px; }
svg text { font-family: "Noto Sans", sans-serif; }
svg .m { font-family: "DejaVu Sans Mono", monospace; }

/* synoptic */
.syn { left: 900px; top: 1296px; width: 1720px; height: 130px; }
.syn .toolbar { margin: 1px 0 0 3px; }
.syn .title .wb { opacity: 0; }
.stabs { height: 26px; flex: none; padding: 4px 4px 0 6px; display: flex; gap: 2px; border-bottom: 4px solid #c8ddf2; border-top: 1px solid #999; margin-top: 3px; white-space: nowrap; font-size: 11.500px; }
.stabs span { height: 18px; background: #b8cfe5; border: 1px solid #8aa2bc; border-bottom: 0; padding: 0 5px 0 12px; display: flex; gap: 11px; align-items: center; border-top-left-radius: 5px; }
.stabs .on { background: #c8ddf2; }
.stabs i { width: 13px; height: 13px; background: #e81010; color: #fff; font-size: 10px; line-height: 13px; text-align: center; border: 1px solid #a00; }
.sbody { flex: 1; background: #fff; margin: 0 8px; border: 1px solid #888; font: bold 20px/24px "Liberation Sans", sans-serif; color: #000; padding: 15px 0 0 170px; white-space: nowrap; }

/* RF working set */
.rf { left: 1761px; top: 50px; width: 793px; height: 1151px; }
.rf .menu { height: 22px; }
.rf .toolbar { height: 29px; margin-top: 1px; padding-left: 2px; }
.sra { flex: none; margin: 2px 5px 0; height: 32px; background: #c0c0c0; border: 1px solid #888; padding: 0 5px; font-weight: 500; line-height: 15px; }
.sra i { display: inline-block; width: 9px; height: 9px; border-radius: 9px; border: 1px solid #567; background: #eef4fa; margin: 0 5px 0 18px; }
.sra i.dot { margin-left: 0; background: radial-gradient(circle, #222 2px, #dde 3px); }
.sra i.off { background: none; border-color: #999; }
.rfmain { display: flex; height: 929px; flex: none; margin: 3px 5px 0 6px; border: 2px solid #a8dcdc; border-right: 0; overflow: hidden; }
.rft { width: 755px; overflow: hidden; font: 11.600px/14px "DejaVu Sans Mono", monospace; color: #000; background: #eee; flex: none; padding: 1px 0 0 1px; }
.rfh { height: 17px; background: #808080; border: 1px solid #555; color: #fff; text-align: center; font: 500 12.500px/15px "Noto Sans", sans-serif; margin-bottom: 2px; }
.rfs { margin-bottom: 2px; background: #c0c0c0; }
.rfr { display: grid; height: 16px; gap: 2px; padding: 1px; }
.rfr span { background: #e4e4e4; padding: 0 1px; text-align: right; white-space: nowrap; overflow: hidden; line-height: 14px; }
.rfr span:first-child { text-align: left; }
.rfr.h span { text-align: center; background: #eee; }
.rfr.h span:first-child { font-weight: bold; text-align: center; }
.rfr .w { background: #fff; }
.rfr .g { background: #adff2f; }
.rfr .r { background: #fa8072; }
.rfr .k { background: #000; color: #fff; }
.vs { width: 16px; margin-left: 4px; display: flex; flex-direction: column; border: 1px solid #8aa; }
.vs i, .hs i { height: 15px; line-height: 14px; text-align: center; font-size: 9px; color: #222; }
.vs b { flex: 1; background: linear-gradient(transparent 518px, #6382b8 518px, #6382b8 519px, #eee 519px), linear-gradient(90deg, #fff, #b8cfe5); }
.hs { height: 15px; flex: none; margin: 0 22px 0 7px; border: 1px solid #8a9aaa; display: flex; }
.hs b { flex: 1; border: 1px solid #8a9aaa; border-width: 0 1px; }
.hs i { width: 16px; }
.rfbar { flex: none; height: 30px; margin: 2px 7px 0; border: 1px solid #888; display: flex; align-items: center; gap: 1px; padding-left: 3px; }
#rficons { display: flex; gap: 1.300px; margin-right: 7px; }
#rficons svg { width: 20.500px; height: 20px; }
.rfbar button { height: 21px; padding: 0 3px; border: 1px solid #888; background: #f2f2f2; color: #00d; font-weight: 700; line-height: 17px; white-space: nowrap; }
.thin { flex: none; height: 6px; margin: 2px 8px 0; border: 1px solid #8a9aaa; }
.rf .status { margin-top: 3px; }
.rf .foot b { width: 624px; }

/* tomoscope */
.tomo { left: 2584px; top: -1px; width: 782px; height: 688px; }
.tomo .title { height: 19px; }
.tomo .wb { margin-left: 10px; }
.tmain { height: 553px; flex: none; display: flex; margin: 1px 5px 0; gap: 3px; }
.tmain > svg { width: 613px; height: 551px; flex: none; }
.tside { width: 153px; border: 1px solid #aaa; padding: 1px; font-weight: 500; white-space: nowrap; display: flex; flex-direction: column; align-items: stretch; }
.tb { height: 28px; line-height: 27px; border: 1px solid #a0a0a0; margin-bottom: 2px; font-weight: 500; padding-left: 1px; flex: none; overflow: hidden; }
.tk { display: flex; justify-content: flex-end; gap: 9px; align-items: center; height: 43px; padding-right: 5px; color: #000; }
.tk:nth-of-type(4) { margin-top: 5px; }
.tk label, .tctl label { font: bold 11px/12px "DejaVu Sans Mono", monospace; color: #000; letter-spacing: -.600px; }
.tk span, .tks { display: flex; flex-direction: column; align-items: flex-end; font: 11px/8px "DejaVu Sans Mono", monospace; color: #222; }
.tk b, .tks b { font: 500 12px/14px "Noto Sans", sans-serif; color: #000; }
.tside p { margin: 8px 0 0; align-self: flex-start; }
.sel { width: 65px; height: 22px; border: 1px solid #7a8a99; display: flex; line-height: 19px; }
.sel span { flex: 1; padding-left: 9px; }
.sel i { width: 20px; border-left: 1px solid #7a8a99; background: linear-gradient(#fff, #b8cfe5); font-size: 10px; text-align: center; color: #222; }
.sel.wide { width: 120px; margin-top: 229px; }
.tctl { flex: none; height: 45px; margin: 2px 5px 0; border: 1px solid #a0a0a0; display: flex; align-items: center; padding: 0 16px 8px 13px; font-weight: 500; white-space: nowrap; }
.tctl > span:first-child { width: 58px; }
.tctl .n1 { width: 73px; padding-left: 9px; }
.tctl .n1:last-child { width: 50px; }
.tctl .n2 { width: 74px; }
.tctl label { margin: 10px 9px 0 84px; }
.tctl label.u { margin: 10px 0 0 2px; }
.tctl .tks { margin-top: 10px; }
.tctl .n3 { margin: 0 8px 0 auto; }
.tbtn { flex: none; display: flex; justify-content: center; gap: 5px; padding-top: 6px; }
.tbtn button { height: 25px; border: 1px solid #999; background: #eee; color: #999; padding: 0 16px; font-weight: 600; }
.tbtn .on { color: #222; background: linear-gradient(#dce8f4, #fff 30%, #a8c0d8); border-color: #7a8a99; }

/* operation display */
.jod { left: 2588px; top: 675px; width: 790px; height: 751px; background: #eee; }
.jod .title { padding-right: 0; height: 19px; }
.jod .menu { height: 19px; font-size: 12.500px; }
.jod .toolbar { height: 32px; margin: 3px 0 0 4px; padding-left: 3px; }
.jtabs { height: 24px; flex: none; display: flex; padding: 4px 0 0 8px; border-bottom: 1px solid #6382b8; font-weight: 500; white-space: nowrap; }
.jtabs span { border: 1px solid #7a8a99; border-bottom: 0; padding: 0 10px; border-top-left-radius: 6px; }
.jtabs .on { background: #c8ddf2; padding: 0 10px 0 9px; }
.jbody { flex: none; margin: 48px 0 0 9px; width: 774px; height: 603px; border: 3px solid #f00; border-bottom: 0; position: relative; color: #000; display: flex; flex-direction: column; box-shadow: 0 -45px 0 #eee, 0 -48px 0 #c8ddf2; padding-left: 1px; }
.jplot { width: 766px; height: 141px; flex: none; }
.jt { height: 341px; flex: none; border: 1px solid #000; margin-right: 2px; padding: 1px; font-size: 13.500px; font-weight: 500; color: #333; overflow: hidden; }
.jr { display: grid; grid-template-columns: 28px 100px 67px 53px 67px 53px 67px 53px 67px 53px 67px 53px 24px; height: 21px; line-height: 16px; }
.jr span { border-right: 1px solid #8a8a8a; border-bottom: 1px solid #999; text-align: right; background: #dcdcdc; padding-right: 1px; box-shadow: inset 0 1px #f4f4e0; white-space: nowrap; overflow: hidden; }
.jr span:nth-child(2) { text-align: left; padding-left: 4px; }
.jr.o span { background: #e6e6e6; }
.jr.l { height: 31px; }
.jr.l span { border-bottom: 3px solid #00f; }
.jr.h { grid-template-columns: 29px 100px repeat(5, 120px) 24px; height: 24px; line-height: 23px; font-size: 15px; }
.jr.h span { text-align: center; background: #eee; }
.jmid { display: flex; height: 50px; flex: none; padding: 1px 2px 0 1px; gap: 6px; font-size: 13px; text-align: center; font-weight: 500; }
.jmid .l { width: 126px; display: flex; flex-direction: column; gap: 6px; }
.jmid .l span { background: #adff2f; border: 1px solid #999; height: 20px; line-height: 19px; }
.jmid .l .y { background: #ff0; }
.jmid .c { flex: 1; border: 1px solid #aaa; line-height: 46px; font-size: 15px; height: 47px; }
.jmid .r { width: 126px; display: flex; flex-direction: column; gap: 2px; color: #232; }
.jmid .r span { height: 14px; background: #adff2f; overflow: hidden; border: 1px solid #9b3; border-bottom: 2px solid #8a2; line-height: 14px; font-size: 12.500px; flex: none; }
.jbot { display: grid; grid-template-columns: 122px 120px 120px 120px 120px 122px; justify-content: space-between; padding: 1px 3px; height: 67px; }
.jc { border: 1px solid #aaa; border-right: 2px solid #333; text-align: center; }
.jc h3 { margin: 1px; font: 500 13.500px/20px "Noto Sans", sans-serif; height: 21px; background: #adff2f; border: 1px solid #9b3; }
.jc.p { border-right-color: #aaa; color: #00f; }
.jc.p h3 { background: #eee; border-color: #ddd; }
.jc div { display: flex; justify-content: flex-end; align-items: center; gap: 8px; padding-right: 4px; font: 12.500px/14px "DejaVu Sans Mono", monospace; }
.jc pre { margin: 0; font: bold 18px/20px "DejaVu Sans Mono", monospace; text-align: right; }
.jc pre i { display: block; color: #000; }
.jc pre svg { display: block; height: 10px; margin: 1px 0 1px auto; }

/* scope side panel */
.pan { background: #808080; font-size: 13px; line-height: 17px; font-weight: 400; color: #333; white-space: nowrap; }
.pan .cell { background: #eee; border: 1px solid; border-color: #fff #999 #999 #fff; padding-left: 6px; overflow: hidden; }
.pg { display: grid; background: #00f; grid-template-columns: 91px 1fr; gap: 1px; padding: 1px 1px; width: 203px; margin-bottom: 4px; }
.pg .cell { height: 18px; }
.pg.hd { grid-template-columns: 19px 1fr 31px; margin: 0; height: 22px; }
.pg.hd .cell { height: 20px; font-weight: 600; }
.pg.hd .dk { background: #060; }
.pg.hd .on { background: #0f0; text-align: center; line-height: 19px; }
.pg .two { display: grid; grid-template-columns: 1fr 1fr; }
.prow { display: flex; }
.chs { width: 187px; }
.ch { width: 187px; height: 41px; margin-bottom: 3px; border: 1px solid; display: grid; grid-template: 19px 19px / 91px 1fr; gap: 1px; }
.ch .cell { color: #333; height: 19px; }
.ch .nm { grid-column: 1 / 3; font-weight: 600; }
.ch.off .cell { color: #999; }
.sd { width: 16px; background: #b8cfe5; border: 1px solid #c33; border-bottom: 0; }
.tabs2 { width: 16px; display: flex; flex-direction: column; gap: 1px; }
.tabs2 div { height: 43px; background: linear-gradient(90deg, #fff, #b8cfe5); border: 1px solid #7a8a99; writing-mode: vertical-rl; text-align: center; font-size: 11px; line-height: 14px; }
.tabs2 .pl { border-color: #f00; }
.tabs2 svg { width: 12px; height: 38px; }

/* OASIS */
.oasis { left: 3373px; top: 0; width: 1009px; height: 908px; border: 2px solid #4a80c0; border-top: 0; }
.oasis .menu { height: 20px; font-weight: 500; font-size: 13px; background: #fafafa; padding-right: 3px; }
.otool { height: 31px; flex: none; display: flex; align-items: center; background: linear-gradient(#f4f4f4, #d8d8d8); padding-left: 4px; }
.otool svg { width: 24.500px; height: 22px; margin-right: 1.800px; }
#oicons { display: flex; }
#oicons .g { margin-right: 11px; }
.otool em { font-size: 9px; margin-left: 4px; }
.otool strong { margin-left: 172px; font-weight: 500; font-size: 13px; display: flex; align-items: center; }
.omain { height: 808px; flex: none; display: flex; background: #000; padding: 0 4px 0 2px; overflow: hidden; }
#oplot { width: 794px; height: 808px; flex: none; }
.pan.big { width: 205px; height: 805px; margin-top: 2px; overflow: hidden; border-right: 2px solid #00f; }
.foot.o { height: 26px; margin: 2px 4px 3px 2px; }
.foot.o b { width: 841px; font: italic 500 12.500px/20px "Noto Sans", sans-serif; white-space: nowrap; }

.scope2 { left: 3374px; top: 880px; width: 725px; height: 546px; flex-direction: row; padding-top: 26px; }
.frame2 { width: 20px; background: linear-gradient(90deg, #ddd, #fff 8px, #7a8ea6 9px, #eee 11px); flex: none; }
.plots2 { width: 492px; display: flex; flex-direction: column; flex: none; background: #000; }
#sc1 { height: 246px; flex: none; } #sc2 { height: 273px; flex: none; }
.side2 { width: 206px; background: #000; flex: none; }
.p1 { height: 244px; overflow: hidden; }
.low1 { margin-top: -11px; }
.low1 .pg:first-child { margin-top: 0; }
.p2 { margin-top: 5px; height: 272px; overflow: hidden; }

.blm { left: 4155px; top: 880px; width: 227px; height: 546px; padding-top: 27px; border-left: 2px solid #6382b8; border-right: 0; }
.bstrip { height: 7px; background: #b8cfe5; margin-left: 2px; flex: none; }
.blm h2 { font: 600 18px/24px "Noto Sans", sans-serif; margin: 9px 0 0 201px; }
.cards { display: flex; gap: 2px; padding: 19px 0 0 13px; }
.card { width: 90px; height: 118px; flex: none; border: 2px solid #000; display: flex; flex-direction: column; align-items: center; font-size: 13px; font-weight: 500; white-space: nowrap; }
.card b { font-weight: 500; height: 23px; }
.card svg { width: 40px; height: 44px; }
.card span { margin: 9px 0 3px; }
.card em { align-self: flex-start; display: flex; align-items: center; gap: 5px; padding-left: 6px; }
.card em i { width: 11px; height: 11px; border-radius: 9px; border: 1px solid #579; background: radial-gradient(circle, #222 2.500px, #dde8f2 3.500px); }
.ff { left: 4274px; top: 1253px; width: 108px; height: 173px; white-space: nowrap; border-right: 0; }
.fftitle { height: 18px; padding: 2px 8px; background: linear-gradient(#fafafa, #ddd); }
.fftitle i { display: block; width: 14px; height: 14px; border-radius: 9px; background: radial-gradient(circle, #1a5ab0 4px, #e8702a 6px); }
.fftab { height: 30px; display: flex; align-items: center; font-weight: 400; font-size: 13px; padding-left: 28px; gap: 6px; border-bottom: 1px solid #999; }
.fftab i { width: 15px; height: 15px; border: 1px solid #222; background: #c8a870; }
.ffnav { height: 41px; display: flex; align-items: center; font-weight: 400; font-size: 13px; padding-left: 10px; }
.ffnav > i { width: 28px; height: 28px; border-radius: 15px; border: 1px solid #aaa; text-align: center; line-height: 26px; font-size: 15px; color: #888; flex: none; }
.ffnav span { flex: 1; background: #fff; border: 1px solid #bbb; border-right: 0; line-height: 22px; padding-left: 3px; color: #555; font-size: 14px; }
.ffnav em { color: #999; }
.ffgray { height: 21px; margin-top: 8px; background: #c0c0c0; border: 1px solid #888; font: 15px/19px "Liberation Mono", monospace; color: #444; letter-spacing: .300px; }
.ffblue { height: 21px; margin-top: 21px; background: #0c70d4; color: #fff; padding-left: 46px; font-size: 13px; line-height: 20px; box-shadow: 0 -21px #fff, 0 16px #fff; }
```
FILE: app.js
```js
const $ = s => document.querySelector(s), $$ = s => [...document.querySelectorAll(s)];
let seed = 7;
const rnd = () => (seed = (seed * 16807) % 2147483647) / 2147483647;
const use = (id, c = '') => `<svg class="${c}"><use href="#${id}"/></svg>`;
const L = (x1, y1, x2, y2, c, w = 1) => `<path d="M${x1} ${y1}L${x2} ${y2}" stroke="${c}" stroke-width="${w}" fill="none"/>`;
const R = (x, y, w, h, f, s = 'none', sw = 1) => `<rect x="${x}" y="${y}" width="${w}" height="${h}" fill="${f}" stroke="${s}" stroke-width="${sw}"/>`;
const T = (x, y, t, o = '') => `<text x="${x}" y="${y}" ${o}>${t}</text>`;

// window titles
$$('.title').forEach(t => {
  const c = t.dataset.act ? '#fff' : '#999';
  const icon = t.dataset.icon ? '<svg viewBox="0 0 16 16"><rect y="4" width="16" height="8" fill="#fe6"/><circle cx="4" cy="8" r="3" fill="#b00"/><circle cx="12" cy="8" r="3" fill="#b00"/></svg>' : use('java');
  t.innerHTML = icon + `<div class="tt"><span data-w="${t.dataset.tw}">${t.dataset.title}</span></div>` +
    `<svg class="wb" style="width:82px" viewBox="0 0 82 16"><path d="M9 13V4M5.500 7.500L9 4l3.500 3.500M28 12.500h6M52.500 4.500h7v8h-7zM73 4l7 9M80 4l-7 9" fill="none" stroke="${c}" stroke-width="1.600"/></svg>`;
});

// timing toolbars
const timing = () => {
  let s = '';
  for (let i = 0; i < 34; i++) {
    s += `<i class="${[3, 13, 25, 32].includes(i) ? 'n' : i === 14 ? 'cur' : ''}"></i>`;
    if (i === 14) s += '<i class="lab">15/34</i>';
  }
  return `<div class="tim"><div class="row1"><span data-w="395">18 Jul 2017&nbsp; 16:13:53&nbsp; PSB – 14 MD2 | MD_MTE_H1_SYNC_2017</span></div><div class="row2">${s}</div></div>`;
};
const orders = { full: 'clock stop ff skip play plus go', short: 'stop ff play plus go', rf: 'stop ff play plus go', jod: 'clock ff skip play stop plus go' };
$$('.toolbar').forEach(t => {
  const k = t.dataset.kind;
  let h = orders[k].split(' ').map(i => use(i)).join('') + timing();
  if (k === 'full' || k === 'short') h += '<span class="lhc" data-w="221">17 LHC2B | LHC_BCMS_1.5eVs_20...</span>';
  if (k !== 'jod') h += use('power', 'pw') + '<em>▼</em><span class="rba" data-w="69">RBA: cpsop</span>';
  if (k === 'full') h += use('folder', 'last') + use('ghost', 'last');
  if (k === 'rf') h += '<svg class="last" viewBox="0 0 16 16"><path d="M10 14A6 6 0 1 1 13 8M9 7h7l-3 4z" fill="none" stroke="#000" stroke-width="2"/></svg><svg class="last" viewBox="0 0 16 16"><path d="M3 11l8-9h4l-8 9z" fill="#e0c" stroke="#800"/><path d="M3 11h4v4H2z" fill="#fff" stroke="#800"/></svg>';
  t.innerHTML = h;
});

// console menu
$('#ccm-menu').innerHTML = [['<u>F</u>ile', 37], ['Cycle', 50], ['Measur', 64], ['General', 66], ['Control', 66], ['Sampler', 70], ['Synoptic', 72], ['Test', 44], ['CO Diag', 72], ['Obsolete', 75], ['WorkingSet', 106, 'ws'], ['REMUS', 77, 'ws'], ['OASIS', 72, 'ws'], ['<u>A</u>ctive Tasks', 103]]
  .map(([n, w, c]) => `<span class="${c || ''}" style="width:${w}px">${n}</span>`).join('') +
  `<span class="gap">Context</span><span style="width:178px"><b style="font-weight:500" data-w="166">3: PLS_LINE=PSB.USER.MD2</b></span><span style="width:52px">${use('mag')}</span>`;

// digit arrows: one triangle per digit, a gap at the decimal point
const P = 10.9;
const tri = (mask, up) => {
  let d = '';
  [...mask].forEach((c, i) => { if (c !== ' ') { const x = i * P; d += up ? `M${x + .8} 9.500L${x + P / 2} .5L${x + P - .8} 9.500z` : `M${x + .8} .5L${x + P / 2} 9.500L${x + P - .8} .5z`; } });
  const w = mask.length * P;
  return `<svg width="${w}" height="10" viewBox="0 0 ${w} 10"><path d="${d}"/></svg>`;
};
const mask = (v, n) => v.padStart(n, '0').replace(/[^.]/g, 'o').replace('.', ' ');
const knob = (l, v, n) => `<label>${l}</label><pre><i>${tri(mask(v, n), 1)}</i>${v}<i>${tri(mask(v, n), 0)}</i></pre>`;
$$('.kn').forEach(k => k.innerHTML = knob(k.dataset.l, k.dataset.v, +k.dataset.s));
$$('.coef').forEach(p => {
  const k = p.dataset.k.split('|'), a = p.dataset.a.split('|');
  let h = '', g = '';
  for (let i = 0; i < 12; i += 2) {
    h += `<div class="kn">${knob(k[i], k[i + 1], 11)}</div>`;
    g += `<div><b>${k[i]}</b><span>${a[i / 2]}</span></div>`;
  }
  p.innerHTML = `<fieldset><legend>${p.dataset.legend}</legend><div class="kg">${h}</div><div class="cs"><span data-w="40">Cancel</span><span data-w="30">Send</span></div></fieldset><fieldset><legend>Acquisition</legend><div class="ag">${g}</div></fieldset>`;
});

// function editor
{
  let s = '<defs><linearGradient id="eg"><stop offset="0" stop-color="#b8b0a4"/><stop offset="1" stop-color="#fdf5e6"/></linearGradient></defs>' + R(1036, 270, 603, 552, '#fdf5e6') + R(1036, 270, 18, 552, 'url(#eg)') + R(1074, 270, 554, 517, '#fff', '#000');
  for (let i = 0; i < 9; i++) s += L(1099.500 + i * 61.350, 270, 1099.500 + i * 61.350, 787, '#c0c0c0') + L(1099.500 + i * 61.350, 787, 1099.500 + i * 61.350, 792, '#000') + T(1099.500 + i * 61.350, 804, i * 100, 'class="m" font-size="9.500" text-anchor="middle"');
  [[764.600, '0'], [687.600, '0.05'], [611.500, '0.1'], [535, '0.15']].forEach(([y, t]) => s += L(1074, y, 1628, y, '#c0c0c0') + L(1069, y, 1074, y, '#000') + T(1066, y + 4, t, 'class="m" font-size="9.500" text-anchor="end"'));
  s += R(1074, 270, 554, 517, 'none', '#000') + '<path d="M1099.500 764.600L1265 611.500H1532L1541 520" fill="none" stroke="#22e" stroke-width="1.300"/>' + T(1353, 818, 'ms', 'class="m" font-size="9.500" text-anchor="middle"');
  $('#echart').innerHTML = s;
  const d = [['0.000', '0.000'], ['270.6977', '0.100'], ['496.3541', '0.100'], ['705.000', '0.100'], ['760.000', '0.300'], ['820.8039', '0.300']];
  $('#eidx').innerHTML = '<div class="eh">Table<div style="display:block">Index</div></div>' + d.map((r, i) => `<div class="er ${i % 2 ? 's' : ''}">${i}</div>`).join('');
  $('#edat').innerHTML = '<div class="eh"><p><i>J</i><span>BA4.FGPLGAIN/Set<br>tings#yData (ed<br>ited)</span></p><div><span>Time</span><span>Amplitude</span></div></div>' + d.map((r, i) => `<div class="er ${i % 2 ? 's' : i ? '' : 'f'}"><span>${r[0]}</span><span>${r[1]}</span></div>`).join('');
  const curve = '<path d="M18 30c0-18 0-22 4-22s10 0 18 2" fill="none" stroke="#3a8ab8" stroke-width="2.500"/><circle cx="20" cy="9" r="3" fill="#fff" stroke="#555"/>';
  const ic = [curve + '<path d="M29 8v22M18 19h22M29 5l-4 5h8zM29 33l-4-5h8zM15 19l5-4v8zM43 19l-5-4v8z" fill="#4aa0e0" stroke="#3a80c0" stroke-width="2"/>',
    curve + '<circle cx="33" cy="23" r="7" fill="#7c1"/><path d="M29 23h8M33 19v8" stroke="#fff" stroke-width="2"/>',
    curve + '<circle cx="33" cy="23" r="7" fill="#e43"/><path d="M29 23h8" stroke="#fff" stroke-width="2"/>',
    '<circle cx="28" cy="16" r="12" fill="#fff" stroke="#889" stroke-width="2"/><path d="M28 8v8h6" fill="none" stroke="#222" stroke-width="1.500"/><path d="M28 4c-9 0-12 7-12 12" fill="none" stroke="#7c1" stroke-width="4"/>',
    '<rect x="15" y="4" width="24" height="28" rx="2" fill="#b8803a"/><rect x="18" y="7" width="18" height="22" fill="#fff"/><path d="M20 14h14v8H20zM27 14v8M20 18h14" fill="none" stroke="#38a"/><rect x="23" y="1" width="8" height="6" fill="#aaa"/>',
    '<rect x="12" y="2" width="30" height="30" fill="#eee" stroke="#bbb"/><path d="M14 15l7-7 8 10 10-10" fill="none" stroke="#d33" stroke-width="1.500"/><path d="M16 25l14-14 8 6" fill="none" stroke="#3a3" stroke-width="1.500"/><rect x="27" y="18" width="13" height="13" fill="#4ae" stroke="#258"/><rect x="30" y="24" width="7" height="7" fill="#fff"/>'];
  $('#tools').innerHTML = ic.map(i => `<svg viewBox="0 0 54 35"><path d="M0 35V6l6-5.500h48" fill="none" stroke="#7a8a99"/>${i}</svg>`).join('');
}

// sampler
{
  const c = 'SF1PS SF2PS EA3PS MD4BD TO5PS EA6PS NO7BD TO8PS ZE9BD LH10PS LH11PS ZE12BD ZE13BD MD14BD ZE15BD ZE16BD LH17PS ST18PS ZE19BD LH20PS TO21PS MI22PS LH23PS ST24PS EA25PS MD26BD TO27PS EA28PS LH29PS TO30PS EA31PS LH32BD MD33BD ZE34BD'.split(' ');
  $('#xcols').innerHTML = c.map(k => { const m = k.match(/(\D+)(\d+)(\D+)/); return `<span class="${m[2] == 14 ? 'n' : m[1] == 'MD' ? 't' : ''}">${m[1]}<br>${m[2]}<br>${m[3]}</span>`; }).join('');
  const X = v => 1092.500 + v * .4817, Y = v => 419.500 - v * .53;
  let s = R(1057, 139, 636, 342, '#e6e6fa', '#888') + R(1547, 141, 126, 60, '#fff') + R(1089, 203.500, 584, 244.500, '#fff', '#000', 1.300);
  for (let v = 0; v <= 1200; v += 200) s += L(X(v), 204, X(v), 448, '#e4e4e4') + L(X(v), 448, X(v), 453, '#000') + T(X(v) + 3, 464, v, 'class="m" font-size="11.600" text-anchor="middle"');
  for (let v = -50; v <= 400; v += 50) s += L(1090, Y(v), 1673, Y(v), v ? '#e4e4e4' : '#999') + L(1086, Y(v), 1090, Y(v), '#000') + T(1085, Y(v) + 4, v, 'class="m" font-size="11.600" text-anchor="end"');
  const cv = (p, col) => {
    let d = '';
    for (let i = 0; i < p.length - 1; i++) for (let t = 0, n = Math.max(1, (p[i + 1][0] - p[i][0]) / 5); t < n; t++)
      d += `${d ? 'L' : 'M'}${X(p[i][0] + (p[i + 1][0] - p[i][0]) * t / n)} ${Y(p[i][1] + (p[i + 1][1] - p[i][1]) * t / n + (rnd() < .08 ? (rnd() - .5) * 7 : 0))}`;
    s += `<path d="${d}L${X(803)} ${Y(p[p.length - 1][1])}V${Y(133)}" fill="none" stroke="${col}" stroke-width="2.700"/>`;
  };
  cv([[275, 317], [285, 304], [350, 301], [420, 298], [450, 295], [500, 292], [600, 290], [803, 290]], '#000');
  cv([[275, 365], [282, 350], [305, 343], [350, 337], [400, 333], [500, 331], [600, 329], [803, 329]], '#b00000');
  cv([[275, 312], [288, 293], [320, 280], [350, 276], [400, 273], [440, 268], [803, 266]], '#00b400');
  cv([[275, 310], [280, 285], [290, 272], [320, 267], [400, 262], [803, 261]], '#0000b4');
  s += L(X(254), Y(0), X(275), Y(0), '#0000b4', 2.500) + L(X(803), Y(0), X(830), Y(0), '#0000b4', 2.500);
  [275, 765, 807].forEach(v => s += L(X(v), 207, X(v), 446, '#f00'));
  s += T(1224, 397, 'BIX.SINJ', 'class="m" font-size="11.600" fill="#f00"') + T(1430, 371, 'BEX.SEJ', 'class="m" font-size="11.600" fill="#f00"') + T(1382, 424, 'BX.SLFT-TEJ', 'class="m" font-size="11.600" fill="#f00"') + T(1380, 477, 'C[ms]', 'class="m" font-size="11.600" text-anchor="middle"');
  ['#000', '#b00000', '#00b400', '#0000b4'].forEach((k, i) => s += L(1547, 153.500 + i * 15, 1561, 153.500 + i * 15, k) + R(1552, 152 + i * 15, 4, 3, k) + T(1567, 153 + i * 15, `BR${i + 1}.BCT-ST[E10]`, `class="m" font-size="11.600" textLength="105" fill="${k}"`));
  '#222 #a22 #080 #007 #999 #a44 #494 #449 #999 #94a #aa5 #3aa #aaa #c69 #9b7 #59b'.split(' ').forEach((k, i) => { const y = 143.500 + i * 15; s += R(1679.500, y, 10, 10, '#d4d4d4', k, 1.500) + L(1681.500, y + 2, 1687.500, y + 8, i < 4 ? '#000' : '#888') + L(1687.500, y + 2, 1681.500, y + 8, i < 4 ? '#000' : '#888'); });
  s += R(1059, 141, 10, 9, '#ddd', '#f0f') + T(1061, 149, 'L', 'font-size="8"');
  for (let i = 0; i < 5; i++) s += R(1059 + i * 12, 468, 10, 10, '#ccc') + T(1064 + i * 12, 477, '↕↔%⁞●'[i], 'font-size="10" font-weight="bold" text-anchor="middle"');
  s += R(1679.500, 468, 10, 10, '#ddd', '#f0f') + R(1682, 470, 5, 3, 'none', '#000') + R(1682, 474, 5, 3, 'none', '#000');
  $('#xplot').innerHTML = s;
  let t = '';
  [['UP', '#d8d8d8'], ['GO', '#d8d8d8'], ['STOP', '#f07060']].forEach(([n, f], i) => t += R(1056 + i * 27, 511, 22, 22, '#c8c8c8', '#fff') + L(1056 + i * 27, 534, 1079 + i * 27, 534, '#333', 2) + L(1079 + i * 27, 511, 1079 + i * 27, 534, '#333', 2) + `<path d="M${1062 + i * 27} 513h10l5 5v9l-5 5h-10l-5-5v-9z" fill="${f}"/>` + T(1067 + i * 27, 526, n, 'font-size="8" fill="#fff" font-weight="bold" text-anchor="middle"'));
  [1147, 1188, 1229, 1272, 1312, 1353].forEach((x, i) => t += `<circle cx="${x}" cy="522" r="6" fill="${i == 0 || i == 4 ? '#ffffd8' : '#eee'}" stroke="#fff"/><path d="M${x} 516a6 6 0 0 1 0 12" fill="none" stroke="#444" stroke-width="1.500"/>`);
  t += '<path d="M1160 528h4v-12h5v12h5" fill="none" stroke="#000" stroke-width="1.300"/><circle cx="1208" cy="522" r="7" fill="none" stroke="#000"/>';
  [1240, 1283, 1323, 1364].forEach((x, i) => { t += R(x, i ? 518 : 515, 16, i ? 12 : 15, i == 1 ? '#bfb' : '#fff', '#000'); for (let j = 1; j < 5; j++) t += L(x + j * 3.300, i ? 518 : 515, x + j * 3.300, 530, '#000', .8) + L(x, 530 - j * 3, x + 16, 530 - j * 3, '#000', .8); if (i) t += L(x, 515, x + 16, 515, '#000') + `<path d="M${x + 6} 512l5 3-5 3z"/>`; });
  [1135, 1260, 1409, 1668].forEach(x => t += L(x, 510, x, 536, '#888'));
  t += R(1386, 511, 20, 22, '#c8c8c8', '#444') + T(1396, 526, '1.2', 'font-size="9" text-anchor="middle"') + '<path d="M1389 517l3-4 3 4zM1397 517l3-4 3 4zM1389 528l3 4 3-4zM1397 528l3 4 3-4z" fill="none" stroke="#000" stroke-width=".8"/>';
  [['T', 1644], ['S', 1672]].forEach(([c2, x]) => t += R(x, 511, 20, 22, '#c8c8c8', '#444', 1.500) + T(x + 2, 522, c2, 'font-size="9"') + `<circle cx="${x + 13}" cy="518" r="3.500" fill="none" stroke="#000"/><path d="M${x + 13} 522v4l-4 4m4-4l4 4M${x + 3} 530l5-4" stroke="#000" fill="none"/>`);
  $('#xtools').innerHTML = t;
}

// RF working set tables
{
  const N = ['BA4X.', 'true', 'false'];
  const tim = 'EDSP_B 1 1 810.00 810.00|EFINJ 1 1 276.00 276.00|EPL_H1 0 0 500.00 0.00 r|ERL 0 0 810.00 810.00|SFEJSYNC 1 1 0.00 0.01 r|SPLCOR2 0 0 0.00 0.00|SPLCOR3 0 0 0.00 0.00|SPLCOR4 0 0 0.00 0.00|SPL_H1 1 1 275.10 275.10|SPL_H2 1 1 758.00 758.00|SRLCOR2 0 0 0.00 0.00|SRLCOR3 0 0 0.00 0.00|SRLCOR4 0 0 0.00 0.00|SRL 1 1 275.50 275.50|SPLCO4-BEAM 0 0 0.00 0.00|SPLCO4-CO2 1 1 274.00 274.00|C16_H_CHANGE|SBLOWUP_C16 1 1 275.00 275.00|EBLOWUP_C16 1 1 700.00 700.00'.split('|').map(r => {
    const p = r.split(' '), b = v => v === '1' ? N[1] : N[2], sf = p[0] === 'SFEJSYNC';
    return [(sf ? 'BE4X.' : N[0]) + p[0], sf ? 'BA4X.EXTR' : 'BA4X.CO', ...(p.length > 1 ? [b(p[1]), 'g:' + b(p[2]), p[3], (p[5] || 'g') + ':' + p[4]] : ['', '', '', ''])];
  });
  const fg = 'BEAMPOFF FREVCOR PLGAIN RLGAIN RSTEER SIMBTRAIN CO4PHCO2 POFFCO4 C16FS C16MOD'.split(' ').map((n, i) => {
    const on = [2, 3, 4, 6, 8].includes(i), k = on ? 'g:' : 'w:';
    return [(i === 2 ? 'k:' : k) + 'BA4.FG' + n, k + (on ? 'ENABLE' : 'DISABLE')];
  });
  const S = [
    ['1', [141, 204, 205, 204], ['ALLPSBDSPA', 'Dsp Faults', 'Dsp Wrong Parameter', 'Freq Inj.'], [['g:BA4.DSPA', 'g:noFaults', 'g:AllOK', '598900.00']]],
    ['2', [141, 204, 205, 204], ['ALLPSBDSPB', 'Dsp Faults', 'Dsp Wrong Param', 'Freq Extrac'], [['BA4.DSPB', 'noFaults', 'AllOK', '1746270.000000']]],
    ['3', [141, 307, 306], ['ALLPSBDSPC', 'Dsp Faults', 'Dsp Wrong Param'], [['BA4.DSPC', 'noFaults', 'AllOK']]],
    ['4', [141, 613], ['ALLPSBGFAS', 'Enable'], fg],
    ['13', [141, 204, 205, 204], ['RFFunction', 'Enable', 'Amplitude', 'Delay'], [['g:BA4.FGVRFCO2', 'g:Enabled', '8.000000', '265.00'], ['g:BA4.FGVRFCO4', 'g:Enabled', '8.000000', '265.00'], ['g:BA4.FGVRFC16', 'g:Enabled', '1.100000', '500.00']]],
    ['5', [141, 123, 123, 122, 123, 122], ['ALLPSBTIM', 'Reference', 'Enable', 'Enable_aqn', 'Delay', 'Delay_aqn'], tim],
    ['6', [141, 613], ['ALLPSBDDC', 'Phase Offset'], [['BA4.DDC.AO', '0'], ['BA4.DDC.A2', '0'], ['BA4.DDC.B2', '-17'], ['BA4.DDC.CO', '0']]],
    ['8', [141, 204, 205, 204], ['ALLPSBSDDS', 'Noise Enable', 'Modulation Frequency', 'Modulation Depth'], [['BA4.SDDS.C2', 'true', '0.00', '180.00']]]];
  $('#rft').innerHTML = S.map(([n, w, h, rows]) => {
    const st = `style="grid-template-columns:${w.map(x => (x - 2) + 'px').join(' ')}"`;
    return `<div class="rfh">PSB:RF-RING4/${n}</div><div class="rfs"><div class="rfr h" ${st}>${h.map(c => `<span>${c}</span>`).join('')}</div>` + rows.map(r => `<div class="rfr" ${st}>${r.map(c => { const m = c.match(/^([gwrk]):(.*)/); return m ? `<span class="${m[1]}">${m[2]}</span>` : `<span>${c}</span>`; }).join('')}</div>`).join('') + '</div>';
  }).join('');
  const ic = ['<path d="M4 4h12v3H4zM4 9h12v3H4zM4 14h12v3H4z" fill="#9a8" stroke="#343"/>', '<path d="M3 15l4-10h6l4 10" fill="none" stroke="#22e" stroke-width="1.500"/>', '<path d="M6 7h8l-4 7z"/>', '<text x="10" y="9" font-size="7" text-anchor="middle" fill="#00f">PPM</text><text x="10" y="17" font-size="7" text-anchor="middle" fill="#f00">PPM</text>', '<path d="M4 4l12 12" stroke="#e85" stroke-width="3"/><path d="M16 4L4 16" stroke="#999" stroke-width="3"/>', '<path d="M4 3h12v11h-6l-3 3v-3H4z" fill="#ffc" stroke="#333"/><text x="10" y="13" font-size="10" text-anchor="middle">?</text>', '<path d="M3 8h5l3-5 5 3" stroke="#f44" fill="none"/><path d="M3 11h5l3-3 6 1" stroke="#0a0" fill="none"/><path d="M3 16h6l3-2 5 2" stroke="#80f" fill="none" stroke-width="2"/>', '<path d="M3 3h6v4H3zM11 3h6v4h-6zM11 9h6v4h-6zM3 13h6v4H3z" fill="#0c0"/>', '<circle cx="10" cy="10" r="8" fill="#3aa53a"/><path d="M6 10l3 4 5-8" stroke="#fff" stroke-width="2" fill="none"/>', '<path d="M2 3h12M8 3v14M11 8v9M17 8v9M11 12h6" stroke="#000" stroke-width="2"/>', '<rect x="1" y="1" width="18" height="18" fill="#00d"/><path d="M10 3v14M10 9l-5 6M10 9l5 6" stroke="#c00" stroke-width="2"/>'];
  $('#rficons').innerHTML = ic.map(i => `<svg viewBox="0 0 20 20"><rect x=".5" y=".5" width="19" height="19" fill="#f4f4f4" stroke="#888"/>${i}</svg>`).join('');
}

// tomoscope
{
  const st = '0 #a00000,1.3 #f00,3.4 #ff5000,4.6 #ffa000,5.6 #ff0,7 #ffffb0,9.5 #fffff0,17 #fffff2,23 #ffffc4,25 #ff8,26 #ff0,27.2 #ffa000,28.8 #f40,29.8 #d00000,30.8 #400000,32 #180000,35 #180000,36.2 #400,37.3 #d00000,38.2 #ff2800,40.2 #ff9000,41.8 #ff0,43 #ffffa8,45 #fffff0,53 #fffff0,57.5 #ffffc4,59.4 #ffff50,60.3 #ff0,61.6 #ffa000,63.2 #ff5000,64.8 #e00000,66 #700000,67.2 #280000,69.5 #280000,70.8 #500000,72.2 #e00000,73.6 #ff5000,75.3 #ff9000,76.6 #ff0,77.8 #ffffa8,80 #fffff0,89 #fffff0,94.5 #ffffc4,96.2 #ff0,98 #ff9000,100 #ff5000';
  let s = R(2590.500, 40.500, 612, 550, '#eee', '#aaa') + '<defs><clipPath id="tc"><rect x="2604" y="43" width="587" height="505"/></clipPath><linearGradient id="tg" gradientUnits="userSpaceOnUse" x1="2604" x2="3191" y1="0" y2="0">' +
    st.split(',').map(p => { const [o, c] = p.split(' '); return `<stop offset="${o}%" stop-color="${c}"/>`; }).join('') + '</linearGradient></defs><g clip-path="url(#tc)">';
  for (let i = 0; i < 101; i++) s += `<rect x="2580" y="${43 + i * 5}" width="640" height="5.300" fill="url(#tg)" transform="translate(${(Math.sin(i / 7) * 1.600 + (rnd() - .5) * 2.600).toFixed(2)} 0)"/>`;
  for (let i = 0; i < 500; i++) s += R((2787 + rnd() * 24 + (i % 2 ? 208 : 0)).toFixed(1), (43 + rnd() * 500).toFixed(1), (3 + rnd() * 6).toFixed(1), 3, i % 4 < 2 ? '#000' : '#4a0000').replace('/>', ' opacity=".3"/>');
  s += '</g>' + R(2603.500, 42.500, 588, 506, 'none', '#000');
  for (let i = 0; i < 8; i++) s += L(2603.500 + i * 73.500, 549, 2603.500 + i * 73.500, 554, '#000') + T(2603 + i * 73.500, 568, i * 100, 'font-size="12" font-weight="500" text-anchor="middle"');
  s += T(2898, 587, 'ns', 'font-size="12" font-weight="600" text-anchor="middle"');
  $('#tplot').innerHTML = s;
}

// operation display
{
  let s = R(2603, 825, 764, 140, '#eee', '#000') + R(2641, 834, 728, 123, '#fff');
  const Y = v => 957.500 - v * .618;
  for (let v = 0; v <= 200; v += 50) s += L(2641, Y(v), 3368, Y(v), v % 200 ? '#bbb' : '#000') + L(2636, Y(v), 2641, Y(v), '#000') + T(2632, Y(v) + 5, v, 'font-size="13" font-weight="500" text-anchor="end"');
  s += L(2641, 834, 2641, 958, '#000');
  [['02', 250.018], ['06', 170.250, 68], ['07', 160.450, 94], ['10', 156.743, 98], ['20', 153.672, 98], ['30', 147.853, 96], ['40', 147.333, 100], ['50', 146.858, 100], ['60', 147.906, 101]].forEach(([n, v, p], i) => {
    const x = 2725 + i * 69.700, t = Math.max(834, Y(Math.min(200, v)) - (i ? 5 : 0));
    s += R(x - 25, t, 50, 957 - t, '#0086c8', '#066a9c');
    const by = i ? t + 21 : t + 29, bh = p ? 31 : 16;
    s += R(x - 26, by, 53, bh, '#fff', '#000') + T(x, by + 13, v.toFixed(3), 'font-size="12.500" font-weight="500" text-anchor="middle" textLength="50"');
    if (p) s += T(x, by + 28, p + ' %', 'font-size="12.500" font-weight="500" text-anchor="middle"');
    s += R(x - 13, 934.500, 22, 27, '#c8e0a8', '#000') + T(x - 2, 946, 'BCT', 'font-size="10.500" font-weight="600" text-anchor="middle"') + T(x - 2, 959, n, 'font-size="10.500" font-weight="600" text-anchor="middle"');
  });
  $('#jplot').innerHTML = s + L(2602, 964.500, 3368, 964.500, '#000', 2);
  const rows = ['BI.BCT10|783||790||790||846||||', 'BI.BCT20|740|95 %|768|97 %|759|96 %|796|94 %|||0', 'Injection|317|43 %|365|48 %|310|41 %|309|39 %|1302||1', 'Capture|303|96 %|346|95 %|290|94 %|273|88 %|1212|93 %|2', 'Accel.|290|96 %|330|95 %|266|92 %|261|96 %|1147|95 %|3', 'BT.BCT10|||||||||1136|99 %|4', 'BTP.BCT10|||||||||3|0 %|5', 'BTM.BCT10|||||||||1130|99 %|5', 'BTY.BCT112|||||||||0|0 %|5', 'BTY.BCT183|||||||||1|0 %|5', 'BTY.BCT213|||||||||1|0 %|5', 'BTY.BCT325|||||||||1|0 %|5'];
  $('#jt').innerHTML = '<div class="jr h">' + ['', '', 'Ring 1', 'Ring 2', 'Ring 3', 'Ring 4', 'Sum', ''].map(c => `<span>${c}</span>`).join('') + '</div>' +
    rows.map((r, i) => `<div class="jr ${[5, 6, 7, 9, 11].includes(i) ? 'l' : ''} ${[1, 5, 7, 9, 11].includes(i) ? 'o' : ''}"><span>${i}</span>${r.split('|').slice(0, 12).map(c => `<span>${c}</span>`).join('')}</div>`).join('');
  $('#jbot').innerHTML = [['Increment', '', '0.00', 'p'], ['Ring 1', 'Turns', '4.99'], ['Ring 2', 'Turns', '4.99'], ['Ring 3', 'Turns', '4.99'], ['Ring 4', 'Turns', '5.47'], ['All Rings', 'Turns', '-1.00', 'p']]
    .map(([h, l, v, c]) => `<div class="jc ${c || ''}"><h3>${h}</h3><div><label>${l}</label><pre><i>${tri('oo oo', 1)}</i>${v}<i>${tri(' o oo', 0)}</i></pre></div></div>`).join('');
}

// scopes
const noisy = (pts, amp, step) => {
  const out = [];
  for (let i = 0; i < pts.length - 1; i++) {
    const [x0, y0, a0 = amp] = pts[i], [x1, y1, a1 = amp] = pts[i + 1], n = Math.max(1, Math.round(Math.abs(x1 - x0) / step));
    for (let k = 0; k < n; k++) { const t = k / n, a = a0 + (a1 - a0) * t; out.push((x0 + (x1 - x0) * t).toFixed(1) + ',' + (y0 + (y1 - y0) * t + (rnd() + rnd() - 1) * a).toFixed(1)); }
  }
  const e = pts[pts.length - 1];
  return out.join(' ') + ` ${e[0]},${e[1]}`;
};
const PL = (p, c, a = 0, st = 1) => `<polyline points="${noisy(p, a, st)}" fill="none" stroke="${c}" stroke-width="1.100" vector-effect="non-scaling-stroke"/>`;
const zoomIcons = (x, y) => R(x, y, 20, 18, '#dce6f2') + `<use href="#mag" x="${x}" y="${y}" width="20" height="18"/>` + R(x + 25, y, 20, 18, '#d8d8d8') + `<use href="#mag" x="${x + 25}" y="${y}" width="20" height="18" opacity=".25"/>`;
const marker = (x, y, n, c) => `<path d="M${x} ${y}l6-8h10v16h-10z" fill="${c}"/>` + T(x + 11, y + 5, n, 'font-size="13" text-anchor="middle"');
const dmark = (x, y) => `<path d="M${x} ${y}l8 7v10h-16v-10z" fill="#fff"/>` + T(x, y + 15, 'D', 'font-size="12" text-anchor="middle"');
const scopeName = (x, y) => T(x, y, 'PSB:MD2 (14)', 'font-size="10" fill="#ff0" textLength="62"');
{
  let s = R(3377, 69, 794, 808, '#000') + L(3380, 71, 3380, 876, '#055', 2) + L(3380, 71, 4171, 71, '#055', 2) + scopeName(3401, 89) + zoomIcons(4109, 77);
  for (let i = 1; i < 10; i++) s += L(3401.500 + i * 75.100, 101, 3401.500 + i * 75.100, 857, i == 5 ? '#e0e0e0' : '#666') + L(3400, 101 + i * 75.600, 4152, 101 + i * 75.600, i == 5 ? '#e0e0e0' : '#666');
  s += '<g transform="translate(3360 0) scale(.6518 .3333)">';
  const Yl = '#ff0', G = '#0f0', M = '#f0f', C = '#0ff';
  s += PL([[62, 1438], [420, 1438]], M) + PL([[420, 870], [420, 307], [433, 307]], M) + L(433, 307, 433, 1440, '#705070', .8) + PL([[486, 2572], [490, 2350], [497, 2100], [503, 1820], [510, 1600], [523, 1480], [545, 1320, 12], [555, 1250, 20], [565, 1340, 20], [575, 1430, 22], [600, 1380, 22], [620, 1450, 22], [645, 1390, 18], [668, 1445, 18], [690, 1390, 20], [715, 1450, 18], [735, 1400, 22], [752, 1445, 18], [780, 1360, 28], [805, 1370, 30], [830, 1430, 18], [865, 1500, 22], [870, 1450], [874, 1750, 30], [880, 1560, 60], [886, 2200, 20], [890, 2000, 80], [898, 2060, 90], [905, 1930, 90], [912, 1700]], M);
  s += PL([[62, 1894], [421, 1894]], C) + PL([[422, 1950], [432, 1450], [440, 980], [450, 600], [458, 307], [504, 307], [504, 2572]], C) + PL([[571, 2572], [580, 2270], [590, 2100], [605, 1920], [615, 1870], [625, 1845, 10], [640, 1880, 10], [655, 1940, 10], [675, 1885, 14], [697, 1930, 14], [715, 1870, 14], [737, 1905, 14], [757, 1865, 16], [780, 1880, 14], [803, 1840, 22], [825, 1905, 18], [848, 1920, 26], [868, 1880, 26], [872, 1550], [876, 1700, 10], [885, 1200], [890, 1060, 60], [897, 1040, 70], [905, 1080, 90], [911, 1250, 100]], C, 0, .8);
  s += PL([[62, 1099], [420, 1099]], G) + PL([[422, 2385], [427, 2300], [434, 2050], [440, 1900], [450, 1800], [462, 1750, 24], [475, 1720, 24], [490, 1590, 14], [500, 1520, 14], [515, 1480, 20], [530, 1400, 30], [550, 1330, 34], [580, 1250, 30], [600, 1210, 22], [625, 1200, 22], [650, 1145, 20], [668, 1185, 20], [690, 1110, 24], [710, 1160, 16], [730, 1090, 26], [752, 1150, 20], [775, 1085, 24], [795, 1110, 20], [830, 1105, 24], [866, 1115, 20], [875, 1030, 70], [885, 940, 60], [897, 905, 50], [905, 950, 80], [913, 890, 30]], G, 0, .8);
  s += PL([[62, 646], [420, 646]], Yl) + L(420.500, 870, 420.500, 1440, '#aaa', .8) + PL([[421, 1880], [421, 2572]], Yl) + PL([[448, 2572], [455, 2200], [465, 1780], [475, 1500], [485, 1250], [500, 960], [510, 820], [520, 735], [535, 650, 20], [555, 580, 20], [570, 580, 35], [600, 560, 50], [625, 620, 50], [650, 625, 50], [680, 610, 58], [710, 640, 58], [745, 665, 55], [765, 590, 55], [790, 655, 55], [810, 600, 60], [835, 650, 55], [855, 600, 50], [866, 640, 50], [869, 880, 0], [872, 740], [885, 560, 40], [895, 530, 45], [903, 510, 40], [912, 650, 40]], Yl, 0, .55);
  s += `<rect x="913" y="306" width="71" height="2266" fill="${Yl}"/>`;
  for (let x = 914; x < 984; x += 2.300) { const k = rnd(), c = k < .3 ? M : k < .6 ? C : k < .75 ? G : Yl, y0 = 306 + (rnd() < .5 ? 0 : rnd() * 1200); s += `<path d="M${x} ${y0}V2572" stroke="${c}" stroke-width="${x < 950 || x > 962 ? 1.300 : .5}"/>`; }
  [[914, 1900, C], [917, 1500, C], [923, 1440, M], [928, 1700, G], [933, 1440, '#fff'], [936, 1850, G], [945, 306, C], [951, 306, M], [955, 1500, '#fff'], [961, 1440, C], [968, 1650, M], [972, 306, '#c8c8ff'], [975, 1440, C], [979, 1600, G], [983, 1380, C]].forEach(([x, y, c]) => s += `<path d="M${x} ${y}V2572" stroke="${c}" stroke-width="2"/>`);
  s += PL([[984, 306], [984, 439], [1214, 439]], Yl) + PL([[984, 2089], [1214, 2089]], G) + PL([[984, 1440], [984, 2539], [1214, 2539]], C) + '</g>' + R(3400.500, 100.500, 751.500, 756.500, 'none', G) + L(3402, 105, 3405, 111, '#fff') + L(3402, 109, 3405, 104, '#fff');
  s += marker(4153, 215, 1, Yl) + marker(4153, 367, 2, G) + marker(4153, 480, 3, M) + marker(4153, 631, 4, C) + dmark(3777, 859);
  $('#oplot').innerHTML = s;

  const small = (id, top, by, y0, bottom, ye, gr, mk) => {
    let q = R(3395, top, 492, 280, '#000') + L(3396, top, 3396, bottom + 60, '#055', 2);
    for (let i = 1; i < 10; i++) q += L(3416.500 + i * 45.100, by, 3416.500 + i * 45.100, bottom, i == 5 ? '#bbb' : '#666') + L(3416, y0 + i * 22.850, 3867, y0 + i * 22.850, i == 5 ? '#ddd' : '#666');
    q += R(3416.500, y0, 451, bottom - y0, 'none', '#0f0') + '<g transform="translate(3360 900) scale(.6518 .33546)">' + PL(gr, '#0f0', 3, 4) + PL(ye, '#ff0', 6, 4) + '</g>' + mk + dmark(3643, bottom + 2);
    $(id).innerHTML = q;
  };
  small('#sc1', 907, 907, 903, 1131.500, [[88, 213], [105, 240], [125, 270], [150, 275], [165, 290], [172, 285], [178, 312], [185, 290], [200, 325], [235, 335], [275, 347], [290, 342], [300, 375], [320, 395], [345, 425], [385, 440], [405, 453], [435, 435], [455, 405], [475, 375], [495, 350, 12], [515, 345, 14], [535, 345, 14], [545, 330, 10], [556, 326, 0], [778, 326, 0]],
    [[88, 350, 0], [487, 350, 0], [492, 400], [500, 420, 12], [505, 395], [515, 400], [535, 425], [572, 455], [590, 450], [620, 441], [660, 442], [690, 449], [717, 454], [720, 405], [740, 420, 12], [748, 465], [755, 430], [760, 480], [768, 425], [772, 475], [778, 410]], marker(3869, 1018, 2, '#0f0'));
  small('#sc2', 1153, 1186, 1185.500, 1414, [[88, 992], [97, 1005], [107, 1055], [115, 1030], [128, 1035], [133, 1055], [150, 1052], [175, 1080], [185, 1070], [200, 1098], [225, 1097], [245, 1115], [265, 1100], [290, 1113], [320, 1145], [345, 1188], [370, 1225], [395, 1230], [415, 1258], [435, 1255], [450, 1215], [465, 1185], [490, 1150, 14], [515, 1165, 14], [530, 1150, 14], [545, 1150, 14], [556, 1123, 0], [778, 1123, 0]],
    [[88, 1193, 0], [487, 1193, 0], [488, 1165], [500, 1145, 14], [515, 1175], [540, 1185], [570, 1218], [590, 1212], [597, 1240], [605, 1218], [640, 1207], [696, 1207], [698, 1150], [712, 1175, 20], [720, 1235, 20], [730, 1180, 20], [738, 1245, 20], [746, 1190, 20], [756, 1220, 20], [765, 1180, 20], [775, 1235, 20], [778, 1200]], marker(3869, 1301, 1, '#ff0') + L(3395, 1156, 3887, 1156, '#055', 2) + scopeName(3417, 1174) + zoomIcons(3825, 1162));

  const cell = (t, c = '') => `<div class="cell ${c}">${t}</div>`;
  const cols = '#ff0 #0f0 #f0f #0ff #ffbf00 #f00 #ffb0b0 #0070ff #d8ffff #bfff00 #ffb0e0 #a0ffff #d08000 #6000c0 #aaa #880'.split(' ');
  const chs = (names, n) => { let h = ''; for (let i = 0; i < n; i++) { const m = names[i]; h += `<div class="ch ${m ? '' : 'off'}" style="border-color:${cols[i]};background:${cols[i]}">${cell(m ? m[0] : 'Channel ' + (i + 1), 'nm')}${cell(m ? m[1] : 'Sensitivity')}${cell(m ? m[2] : 'Offset')}</div>`; } return h; };
  const head = '<div class="pg hd"><div class="dk"></div>' + cell('BX.SCY–TS') + '<div class="on">ON</div></div>';
  const gen = (d, t) => `<div class="pg">${cell('MX.C–TRAIN') + cell('NO CLOCK') + cell('0') + cell('0')}</div><div class="pg">${cell(d) + cell(t) + cell('1.5V')}<div class="two">${cell('+') + cell('L')}</div></div>`;
  $('#pan0').innerHTML = head + gen('5ms/div', '770ms') + `<div class="prow"><div class="chs">${chs([['BA1.SPL_PH–DS', '200mrad/div', '700mrad'], ['BA2.SPL_PH–DS', '200mrad/div', '300mrad'], ['BA3.SPL_PH–DS', '200mrad/div', '0rad'], ['BA4.SPL_PH–DS', '200mrad/div', '–400mrad']], 16)}</div><div class="sd"><svg width="14" height="400" viewBox="0 0 14 400"><use href="#plug" x="1" y="330" width="12" height="44"/></svg></div></div>`;
  const tabs = `<div class="tabs2"><div class="pl"><svg><use href="#plug"/></svg></div><div>5–8</div><div>9–12</div><div>13–16</div></div>`;
  const low = b => `<div class="prow"><div class="chs">${chs([[b + '.BEAMP_H1_SW–DS', '100mrad/div', '0rad'], [b + '.BEAMP_H2_SW–DS', '100mrad/div', '0rad']], 4)}</div>${tabs}</div>`;
  $('#pan1').innerHTML = `<div class="low1">${gen('10ms/div', '700ms')}</div>` + low('BA4');
  $('#pan2').innerHTML = head + gen('10ms/div', '700ms') + low('BA3');

  const ball = '<ellipse cx="12" cy="11" rx="8" ry="9" fill="#2a6ac0"/><path d="M6 6c4-4 10-1 8 3s-6 4-8-3M10 14c3-1 5 2 3 5" fill="#4ab858"/>';
  const oi = [ball, ball + '<path d="M3 2l18 18" stroke="#e00" stroke-width="3"/>', ball + '<rect x="4" y="10" width="10" height="10" fill="#fff" stroke="#000"/><rect x="6" y="15" width="5" height="5" fill="#000"/>', '<path d="M3 18l5-4M7 11l6 6 4-4-5-6zM15 8l4-4" stroke="#333" stroke-width="2" fill="#999"/>', '<path d="M3 18l5-4M7 11l6 6 4-4-5-6zM17 2l-3 6h5l-4 6" stroke="#555" stroke-width="1.500" fill="#aa8"/><path d="M17 2l-3 6h5l-4 6" stroke="#cb0" fill="none" stroke-width="2"/>', '<text x="12" y="15" font-size="12" text-anchor="middle" textLength="18" lengthAdjust="spacingAndGlyphs">PLS</text>', '<rect x="7" y="1" width="11" height="20" fill="#333"/><circle cx="12.500" cy="7" r="3.500" fill="#f22"/>', '<path d="M2 3h13v8H2zM10 10h13v10H10z" fill="#fff" stroke="#79c" stroke-width="2"/>', '<path d="M1 1h23v5H1zM1 8.500h23v5H1zM1 16h23v5H1z" fill="#080"/>', '<rect x="5" y="5" width="15" height="13" fill="#c8a000" stroke="#000"/><path d="M8 6v4M11 6v4M14 6v4M17 6v4" stroke="#000"/><text x="12" y="16" font-size="6" text-anchor="middle">391</text>', '<path d="M3 17h5l4-14 5 12h5" stroke="#0d0" fill="none" stroke-width="1.500"/><path d="M6 12h14M9 17l5-13 3 10" stroke="#f22" fill="none"/>', '<path d="M3 12c6-8 14-8 19 0" stroke="#333" fill="none" stroke-width="1.500"/><circle cx="13" cy="14" r="5" fill="#48b"/><circle cx="13" cy="14" r="2"/>', '<path d="M19 4L6 11l13 7" stroke="#000" stroke-width="2.500" fill="none"/><circle cx="18" cy="4" r="3.500"/><circle cx="6" cy="11" r="3.500"/><circle cx="18" cy="18" r="3.500"/>', '<rect x="4" y="2" width="17" height="18" fill="#e8532c"/><ellipse cx="12.500" cy="11" rx="4" ry="5" fill="none" stroke="#fff" stroke-width="1.500"/><path d="M12.500 8v6" stroke="#fff"/>'];
  $('#oicons').innerHTML = oi.map((i, n) => `<svg class="${n == 4 || n == 7 ? 'g' : ''}" viewBox="0 0 24.500 22"><rect x=".5" y=".5" width="23.500" height="21" fill="#f2f2f2" stroke="#aaa"/>${i}</svg>`).join('');
}

// fit labels to their measured widths
$$('[data-w]').forEach(e => {
  const w = +e.dataset.w, r = document.createRange();
  r.selectNodeContents(e);
  const cur = r.getBoundingClientRect().width / .93474, n = e.textContent.length;
  if (w && cur && n) e.style.letterSpacing = ((w - cur) / n).toFixed(3) + 'px';
});
```
